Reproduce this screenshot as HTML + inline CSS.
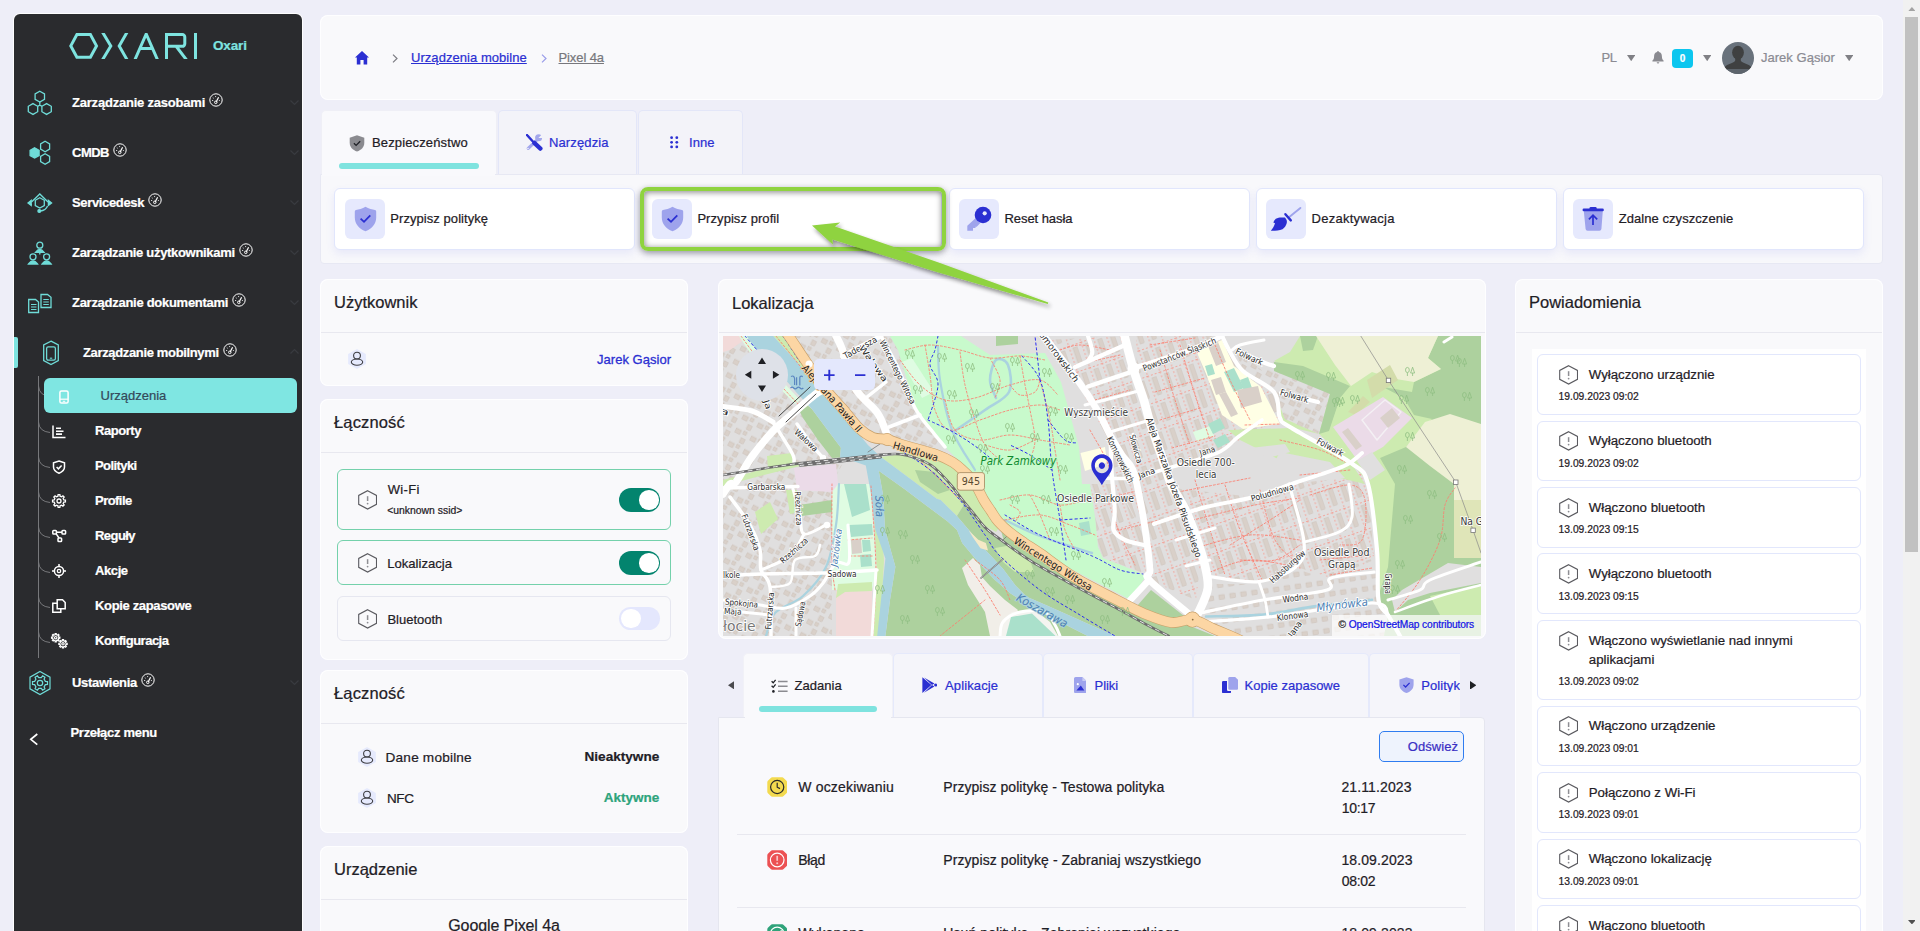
<!DOCTYPE html>
<html lang="pl">
<head>
<meta charset="utf-8">
<title>Oxari - Pixel 4a</title>
<style>
*{box-sizing:border-box;margin:0;padding:0}
html,body{width:1920px;height:931px;overflow:hidden}
body{-webkit-text-stroke:.22px;background:#eeeef8;font-family:"Liberation Sans",sans-serif;color:#1f2026;position:relative;font-size:14px}
.abs{position:absolute}
.card{position:absolute;background:#f9f9fb;border-radius:8px;box-shadow:inset 0 0 0 1px #fefeff}
.t{position:absolute;white-space:nowrap;line-height:1}
/* sidebar */
#side{position:absolute;left:14px;top:14px;width:288px;height:917px;background:#2a2b2e;border-radius:6px 6px 0 0;box-shadow:0 0 0 1px rgba(255,255,255,.85)}
#side .mi{position:absolute;margin-top:1.2px;left:58px;color:#fff;font-weight:bold;font-size:13px;letter-spacing:-.3px;white-space:nowrap;line-height:16px}
#side .sm{position:absolute;left:81px;color:#fff;font-weight:bold;font-size:13px;letter-spacing:-.45px;white-space:nowrap;line-height:16px}
#side svg{position:absolute;overflow:visible}
#side .mi svg.g{position:relative;display:inline-block;vertical-align:top;margin-left:4px;top:-2px}
.chev{position:absolute;left:275.5px;width:9px;height:9px}
/* header */
.hdrtxt{color:#8a8a92;font-size:13px;letter-spacing:-.3px}
/* cards heading */
.h{position:absolute;left:14px;top:15px;font-size:16.5px;color:#1f2026;letter-spacing:-.2px;white-space:nowrap;line-height:18px}
.hr{position:absolute;left:0;right:0;height:1px;background:#e9e9f0}
.act{position:absolute;top:188.5px;height:60.5px;width:301px;background:#fff;border-radius:6px;border:1px solid #eef0fb;box-shadow:0 2px 6px rgba(80,90,200,.10)}
.act .ib{position:absolute;left:9.3px;top:10px;width:40px;height:40px;border-radius:6px;background:#e6e9fd}
.act .lb{position:absolute;left:55px;top:22px;font-size:13px;letter-spacing:.06px;color:#1f2026;white-space:nowrap;line-height:16px}

.lnk{color:#2b2fd2}
.tab{position:absolute;top:110px;height:65px;background:#f3f3f9;border:1px solid #e3e6f8;border-bottom:none;border-radius:5px 5px 0 0}
.tab.on{background:#f9f9fc;border-color:#efeff6}
.b13{font-size:13px;letter-spacing:.08px}

.act{top:188px !important;height:61.5px !important;border-color:#e1e6fc !important;box-shadow:0 4px 8px rgba(90,100,230,.10) !important}
.hd{position:absolute;left:14px;font-size:16.5px;color:#1f2026;white-space:nowrap;line-height:1;top:15.4px}
.dv{position:absolute;left:1px;right:1px;height:1px;background:#e8e8ef;top:53px}
.tg{position:absolute;left:17px;width:334px;border:1px solid #e6e7f0;border-radius:6px}
.tg.on{border:1.2px solid #74d1ab}
.sw{position:absolute;left:282px;width:41.3px;height:23.6px;border-radius:12px;background:#03846e}
.sw i{position:absolute;right:1.6px;top:2px;width:19.6px;height:19.6px;border-radius:50%;background:#fff}
.sw.off{background:#e4e7fd}
.sw.off i{right:auto;left:2px}

.tb2{position:absolute;top:653px;height:64.6px;background:#f5f5fa;border:1px solid #e5e9fb;border-bottom:none;border-radius:5px 5px 0 0}
.tb2.on{background:#f9f9fc;border-color:#f1f1f7}
.tk{position:absolute;font-size:14px;white-space:nowrap;line-height:1;color:#1f2026}
.nt{position:absolute;left:1537.2px;width:323.8px;background:#fff;border:1px solid #e2e7fc;border-radius:6px}
.nt .tt{position:absolute;left:50.6px;top:9.5px;font-size:13.25px;line-height:19px;color:#1f2026;white-space:nowrap}
.nt .dt{position:absolute;left:20.4px;font-size:10.3px;line-height:1;color:#1f2026;white-space:nowrap}
</style>
</head>
<body>

<!-- SIDEBAR -->
<div id="side">
  <svg style="left:55px;top:19px;overflow:hidden" width="132" height="26" viewBox="0 0 132 26" fill="none" stroke="#7ee4e0" stroke-width="3" stroke-linejoin="miter">
    <path d="M1.8 12.9 L7.9 1.6 H21.4 L27.5 12.9 L21.4 24.2 H7.9 Z"/>
    <path d="M33.4 -1 L41.8 12.9 L33.4 27 M58.2 -1 L50.2 12.9 L58.2 27"/>
    <path d="M65.8 27 L77.2 1 L88.6 27 M70.5 15.4 H84"/>
    <path d="M97.5 27 V1.6 H113.3 a2.5 2.5 0 0 1 2.5 2.5 V10.8 a2.5 2.5 0 0 1 -2.5 2.5 H97.5 M107.3 13.5 L117.6 27"/>
    <path d="M126.5 -1 V27"/>
  </svg>
  <div class="t" style="left:199px;top:24.5px;color:#7ee4e0;font-weight:bold;font-size:13.5px;letter-spacing:-.15px">Oxari</div>
  <div class="mi" style="left:58px;top:80px;letter-spacing:-0.21px">Zarządzanie zasobami<svg class="g" width="14" height="14" viewBox="0 0 14 14" fill="none" stroke="#fff" stroke-width="1"><circle cx="7" cy="7" r="6.2"/><path d="M7 9.2 L9.6 4.2" stroke-width="1.2"/><circle cx="6.8" cy="9.3" r="1.3" stroke-width=".9"/><path d="M3 7.5 h1.2 M3.8 4.6 l.9 .7 M6.6 3 v1.1 M10.9 7.5 h-1" stroke-width=".8"/></svg></div>
  <div class="mi" style="left:58px;top:130px;letter-spacing:-0.5px">CMDB<svg class="g" width="14" height="14" viewBox="0 0 14 14" fill="none" stroke="#fff" stroke-width="1"><circle cx="7" cy="7" r="6.2"/><path d="M7 9.2 L9.6 4.2" stroke-width="1.2"/><circle cx="6.8" cy="9.3" r="1.3" stroke-width=".9"/><path d="M3 7.5 h1.2 M3.8 4.6 l.9 .7 M6.6 3 v1.1 M10.9 7.5 h-1" stroke-width=".8"/></svg></div>
  <div class="mi" style="left:58px;top:180px;letter-spacing:-0.35px">Servicedesk<svg class="g" width="14" height="14" viewBox="0 0 14 14" fill="none" stroke="#fff" stroke-width="1"><circle cx="7" cy="7" r="6.2"/><path d="M7 9.2 L9.6 4.2" stroke-width="1.2"/><circle cx="6.8" cy="9.3" r="1.3" stroke-width=".9"/><path d="M3 7.5 h1.2 M3.8 4.6 l.9 .7 M6.6 3 v1.1 M10.9 7.5 h-1" stroke-width=".8"/></svg></div>
  <div class="mi" style="left:58px;top:230px;letter-spacing:-0.31px">Zarządzanie użytkownikami<svg class="g" width="14" height="14" viewBox="0 0 14 14" fill="none" stroke="#fff" stroke-width="1"><circle cx="7" cy="7" r="6.2"/><path d="M7 9.2 L9.6 4.2" stroke-width="1.2"/><circle cx="6.8" cy="9.3" r="1.3" stroke-width=".9"/><path d="M3 7.5 h1.2 M3.8 4.6 l.9 .7 M6.6 3 v1.1 M10.9 7.5 h-1" stroke-width=".8"/></svg></div>
  <div class="mi" style="left:58px;top:280px;letter-spacing:-0.28px">Zarządzanie dokumentami<svg class="g" width="14" height="14" viewBox="0 0 14 14" fill="none" stroke="#fff" stroke-width="1"><circle cx="7" cy="7" r="6.2"/><path d="M7 9.2 L9.6 4.2" stroke-width="1.2"/><circle cx="6.8" cy="9.3" r="1.3" stroke-width=".9"/><path d="M3 7.5 h1.2 M3.8 4.6 l.9 .7 M6.6 3 v1.1 M10.9 7.5 h-1" stroke-width=".8"/></svg></div>
  <div class="mi" style="left:69px;top:330px;letter-spacing:-0.35px">Zarządzanie mobilnymi<svg class="g" width="14" height="14" viewBox="0 0 14 14" fill="none" stroke="#fff" stroke-width="1"><circle cx="7" cy="7" r="6.2"/><path d="M7 9.2 L9.6 4.2" stroke-width="1.2"/><circle cx="6.8" cy="9.3" r="1.3" stroke-width=".9"/><path d="M3 7.5 h1.2 M3.8 4.6 l.9 .7 M6.6 3 v1.1 M10.9 7.5 h-1" stroke-width=".8"/></svg></div>
  <div class="mi" style="left:58px;top:660px;letter-spacing:-0.29px">Ustawienia<svg class="g" width="14" height="14" viewBox="0 0 14 14" fill="none" stroke="#fff" stroke-width="1"><circle cx="7" cy="7" r="6.2"/><path d="M7 9.2 L9.6 4.2" stroke-width="1.2"/><circle cx="6.8" cy="9.3" r="1.3" stroke-width=".9"/><path d="M3 7.5 h1.2 M3.8 4.6 l.9 .7 M6.6 3 v1.1 M10.9 7.5 h-1" stroke-width=".8"/></svg></div>
  <div class="mi" style="left:56.5px;top:710px;letter-spacing:-0.3px">Przełącz menu</div>
  <svg class="chev" style="top:84px" viewBox="0 0 9 9" fill="none" stroke="#393b40" stroke-width="1.2"><path d="M.5 2.5 L4.5 6.5 L8.5 2.5"/></svg>
  <svg class="chev" style="top:134px" viewBox="0 0 9 9" fill="none" stroke="#393b40" stroke-width="1.2"><path d="M.5 2.5 L4.5 6.5 L8.5 2.5"/></svg>
  <svg class="chev" style="top:184px" viewBox="0 0 9 9" fill="none" stroke="#393b40" stroke-width="1.2"><path d="M.5 2.5 L4.5 6.5 L8.5 2.5"/></svg>
  <svg class="chev" style="top:234px" viewBox="0 0 9 9" fill="none" stroke="#393b40" stroke-width="1.2"><path d="M.5 2.5 L4.5 6.5 L8.5 2.5"/></svg>
  <svg class="chev" style="top:284px" viewBox="0 0 9 9" fill="none" stroke="#393b40" stroke-width="1.2"><path d="M.5 2.5 L4.5 6.5 L8.5 2.5"/></svg>
  <svg class="chev" style="top:664px" viewBox="0 0 9 9" fill="none" stroke="#393b40" stroke-width="1.2"><path d="M.5 2.5 L4.5 6.5 L8.5 2.5"/></svg>
  <svg class="chev" style="top:333px" viewBox="0 0 9 9" fill="none" stroke="#393b40" stroke-width="1.2"><path d="M.5 6.5 L4.5 2.5 L8.5 6.5"/></svg>
  <svg style="left:13px;top:76px" width="26" height="26" viewBox="0 0 26 26" fill="none" stroke="#6fdcd8" stroke-width="1.3"><polygon points="12.8,1.2 17.5,3.9 17.5,9.3 12.8,12.0 8.1,9.3 8.1,3.9"/><polygon points="6.0,13.6 10.7,16.3 10.7,21.7 6.0,24.4 1.3,21.7 1.3,16.3"/><polygon points="19.6,13.6 24.3,16.3 24.3,21.7 19.6,24.4 14.9,21.7 14.9,16.3"/><path d="M12.8 12 v4 M10.7 16.3 l2.1 -1.2 l2.1 1.2"/></svg>
  <svg style="left:13px;top:126px" width="26" height="26" viewBox="0 0 26 26" fill="none" stroke="#6fdcd8" stroke-width="1.3"><polygon points="7.6,7.7 12.1,10.3 12.1,15.5 7.6,18.1 3.1,15.5 3.1,10.3" fill="#6fdcd8"/><polygon points="18.1,1.3 22.6,3.9 22.6,9.1 18.1,11.7 13.6,9.1 13.6,3.9"/><polygon points="18.1,13.8 22.6,16.4 22.6,21.6 18.1,24.2 13.6,21.6 13.6,16.4"/></svg>
  <svg style="left:13px;top:176px" width="26" height="26" viewBox="0 0 26 26" fill="none" stroke="#6fdcd8" stroke-width="1.3"><polygon points="12.8,7.7 17.3,10.3 17.3,15.5 12.8,18.1 8.3,15.5 8.3,10.3"/><path d="M4.5 12 L12.8 4 L21 12"/><path d="M1 12.9 L4.2 10.3 V15.5 Z M24.6 12.9 L21.4 10.3 V15.5 Z" fill="#6fdcd8"/><path d="M20.5 16 Q19 20.5 13 21"/><circle cx="12.3" cy="21" r="1.4" fill="#6fdcd8"/></svg>
  <svg style="left:13px;top:226px" width="26" height="26" viewBox="0 0 26 26" fill="none" stroke="#6fdcd8" stroke-width="1.3"><circle cx="12.8" cy="5.2" r="3"/><path d="M8.5 12.3 Q12.8 6.5 17.1 12.3 Z" fill="#6fdcd8"/><circle cx="6" cy="16.8" r="3"/><path d="M1.5 24 Q6 18 10.5 24 Z" fill="#6fdcd8"/><circle cx="19.6" cy="16.8" r="3"/><path d="M15.1 24 Q19.6 18 24.1 24 Z" fill="#6fdcd8"/><path d="M12.8 12.5 v2"/></svg>
  <svg style="left:13px;top:278px" width="26" height="24" viewBox="0 0 26 24" fill="none" stroke="#6fdcd8" stroke-width="1.3"><path d="M1.7 7.5 H8.5 L11.5 10 V20.5 H1.7 Z"/><path d="M4 12.5 h5.5 M4 15 h5.5 M4 17.5 h5.5" stroke-width="1.1"/><path d="M14 2.5 H20.5 L24 5.2 V15.5 H14 Z"/><path d="M16.3 7.5 h5.5 M16.3 10 h5.5 M16.3 12.5 h5.5" stroke-width="1.1"/></svg>
  <svg style="left:28px;top:326px" width="18" height="26" viewBox="0 0 18 26" fill="none" stroke="#6fdcd8" stroke-width="1.3"><path d="M9 1.2 L16.3 5 V20.5 L9 24.6 L1.7 20.5 V5 Z"/><rect x="4.6" y="6.8" width="8.8" height="13.4" rx="1.6"/><path d="M7.8 18.2 h2.4" stroke-width="1.1"/></svg>
  <div class="abs" style="left:0;top:323px;width:4px;height:31px;background:#7ee4e0;border-radius:0 2px 2px 0"></div>
  <svg style="left:14px;top:656px" width="24" height="26" viewBox="0 0 24 26" fill="none" stroke="#6fdcd8" stroke-width="1.2"><polygon points="12.0,1.4 22.0,7.2 22.0,18.8 12.0,24.6 2.0,18.8 2.0,7.2"/><polygon points="17.36,11.38 19.48,11.65 19.48,14.35 17.36,14.62 16.08,16.83 16.91,18.80 14.57,20.15 13.28,18.45 10.72,18.45 9.43,20.15 7.09,18.80 7.92,16.83 6.64,14.62 4.52,14.35 4.52,11.65 6.64,11.38 7.92,9.17 7.09,7.20 9.43,5.85 10.72,7.55 13.28,7.55 14.57,5.85 16.91,7.20 16.08,9.17"/><circle cx="12" cy="13" r="2.7"/></svg>
  <svg style="left:15px;top:719px" width="10" height="13" viewBox="0 0 10 13" fill="none" stroke="#fff" stroke-width="1.7"><path d="M8.3 1 L1.8 6.3 L8.3 11.6"/></svg>
  <div class="abs" style="left:24px;top:362px;width:1px;height:282px;background:#77787b"></div>
  <svg style="left:24px;top:372.0px" width="13" height="12" viewBox="0 0 13 12" fill="none" stroke="#77787b" stroke-width="1"><path d="M.5 0 Q1 9.5 12 10.5"/></svg>
  <svg style="left:24px;top:408.0px" width="13" height="12" viewBox="0 0 13 12" fill="none" stroke="#77787b" stroke-width="1"><path d="M.5 0 Q1 9.5 12 10.5"/></svg>
  <svg style="left:24px;top:443.0px" width="13" height="12" viewBox="0 0 13 12" fill="none" stroke="#77787b" stroke-width="1"><path d="M.5 0 Q1 9.5 12 10.5"/></svg>
  <svg style="left:24px;top:477.5px" width="13" height="12" viewBox="0 0 13 12" fill="none" stroke="#77787b" stroke-width="1"><path d="M.5 0 Q1 9.5 12 10.5"/></svg>
  <svg style="left:24px;top:513.0px" width="13" height="12" viewBox="0 0 13 12" fill="none" stroke="#77787b" stroke-width="1"><path d="M.5 0 Q1 9.5 12 10.5"/></svg>
  <svg style="left:24px;top:547.7px" width="13" height="12" viewBox="0 0 13 12" fill="none" stroke="#77787b" stroke-width="1"><path d="M.5 0 Q1 9.5 12 10.5"/></svg>
  <svg style="left:24px;top:583.0px" width="13" height="12" viewBox="0 0 13 12" fill="none" stroke="#77787b" stroke-width="1"><path d="M.5 0 Q1 9.5 12 10.5"/></svg>
  <svg style="left:24px;top:617.7px" width="13" height="12" viewBox="0 0 13 12" fill="none" stroke="#77787b" stroke-width="1"><path d="M.5 0 Q1 9.5 12 10.5"/></svg>
  <div class="abs" style="left:30px;top:364px;width:253px;height:35px;background:#7fe6e2;border-radius:6px"></div>
  <div class="t" style="left:86.5px;top:374.5px;font-size:13px;color:#34495a;letter-spacing:0">Urządzenia</div>
  <svg style="left:45px;top:375.5px" width="10" height="14" viewBox="0 0 10 14" fill="none" stroke="#fff" stroke-width="1.5"><rect x=".9" y=".9" width="8.2" height="12.2" rx="1.6"/><path d="M1 9.2 h8" stroke-width="1.2"/><path d="M3.8 11.3 h2.4" stroke-width="1"/></svg>
  <div class="sm" style="top:408.5px;letter-spacing:-0.44px">Raporty</div>
  <div class="sm" style="top:443.5px;letter-spacing:-0.58px">Polityki</div>
  <div class="sm" style="top:478.6px;letter-spacing:-0.54px">Profile</div>
  <div class="sm" style="top:513.5px;letter-spacing:-0.55px">Reguły</div>
  <div class="sm" style="top:548.6px;letter-spacing:-0.4px">Akcje</div>
  <div class="sm" style="top:583.5px;letter-spacing:-0.34px">Kopie zapasowe</div>
  <div class="sm" style="top:618.6px;letter-spacing:-0.5px">Konfiguracja</div>
  <svg style="left:38px;top:410.5px" width="14" height="14" viewBox="0 0 14 14" fill="none" stroke="#fff" stroke-width="1.5"><path d="M1 .5 V12.5 H13.5"/><path d="M4 3.3 h5 M4 6.2 h7.5 M4 9.1 h6" stroke-width="1.6"/></svg>
  <svg style="left:38px;top:445.5px" width="14" height="14" viewBox="0 0 14 14" fill="none" stroke="#fff" stroke-width="1.5"><path d="M7 1 L12.5 2.8 V7 Q12.5 11 7 13.2 Q1.5 11 1.5 7 V2.8 Z"/><path d="M4.6 7 L6.4 8.8 L9.6 5.4"/></svg>
  <svg style="left:38px;top:479.5px" width="14" height="14" viewBox="0 0 14 14" fill="none" stroke="#fff" stroke-width="1.5"><polygon points="11.78,5.93 13.44,6.13 13.44,7.87 11.78,8.07 11.14,9.63 12.17,10.94 10.94,12.17 9.63,11.14 8.07,11.78 7.87,13.44 6.13,13.44 5.93,11.78 4.37,11.14 3.06,12.17 1.83,10.94 2.86,9.63 2.22,8.07 0.56,7.87 0.56,6.13 2.22,5.93 2.86,4.37 1.83,3.06 3.06,1.83 4.37,2.86 5.93,2.22 6.13,0.56 7.87,0.56 8.07,2.22 9.63,2.86 10.94,1.83 12.17,3.06 11.14,4.37" stroke-width="1.3"/><circle cx="7" cy="7" r="2" stroke-width="1.3"/></svg>
  <svg style="left:38px;top:514.5px" width="14" height="14" viewBox="0 0 14 14" fill="none" stroke="#fff" stroke-width="1.5"><rect x=".8" y="1.5" width="3.6" height="3.6" rx=".8"/><rect x="10" y="1.5" width="3.6" height="3.6" rx=".8"/><rect x="6" y="9" width="3.6" height="3.6" rx=".8"/><path d="M4.4 3.3 H10 M4.2 4.8 L7 9"/></svg>
  <svg style="left:38px;top:549.5px" width="14" height="14" viewBox="0 0 14 14" fill="none" stroke="#fff" stroke-width="1.5"><circle cx="7" cy="7" r="4.6"/><circle cx="7" cy="7" r="1.7" stroke-width="1.3"/><path d="M7 0 v2.4 M7 11.6 v2.4 M0 7 h2.4 M11.6 7 h2.4"/></svg>
  <svg style="left:38px;top:585.0px" width="14" height="14" viewBox="0 0 14 14" fill="none" stroke="#fff" stroke-width="1.5"><path d="M5.2 .8 H10.5 L13.2 3.5 V9.8 H5.2 Z"/><path d="M5.2 4.2 H.8 V13.2 H8.8 V9.8"/></svg>
  <svg style="left:37px;top:618.7px" width="17" height="16" viewBox="0 0 17 16" fill="none" stroke="#fff" stroke-width="1.2"><polygon points="7.63,4.05 8.86,4.14 8.86,5.26 7.63,5.35 7.23,6.31 8.04,7.25 7.25,8.04 6.31,7.23 5.35,7.63 5.26,8.86 4.14,8.86 4.05,7.63 3.09,7.23 2.15,8.04 1.36,7.25 2.17,6.31 1.77,5.35 0.54,5.26 0.54,4.14 1.77,4.05 2.17,3.09 1.36,2.15 2.15,1.36 3.09,2.17 4.05,1.77 4.14,0.54 5.26,0.54 5.35,1.77 6.31,2.17 7.25,1.36 8.04,2.15 7.23,3.09"/><circle cx="4.7" cy="4.7" r="1.2"/><polygon points="14.93,10.15 16.16,10.24 16.16,11.36 14.93,11.45 14.53,12.41 15.34,13.35 14.55,14.14 13.61,13.33 12.65,13.73 12.56,14.96 11.44,14.96 11.35,13.73 10.39,13.33 9.45,14.14 8.66,13.35 9.47,12.41 9.07,11.45 7.84,11.36 7.84,10.24 9.07,10.15 9.47,9.19 8.66,8.25 9.45,7.46 10.39,8.27 11.35,7.87 11.44,6.64 12.56,6.64 12.65,7.87 13.61,8.27 14.55,7.46 15.34,8.25 14.53,9.19"/><circle cx="12" cy="10.8" r="1.2"/></svg>
</div>

<!-- HEADER -->
<div class="card" style="left:320px;top:15px;width:1563px;height:84.5px;border-radius:8px"></div>
<svg class="abs" style="left:355px;top:51px" width="14" height="13.5" viewBox="0 0 14 13.5"><path d="M7 0 L14 6.6 H12.2 V13.5 H8.6 V9 H5.4 V13.5 H1.8 V6.6 H0 Z" fill="#2b2fd2"/></svg>
<svg class="abs" style="left:392px;top:53.5px" width="6" height="9" viewBox="0 0 6 9" fill="none" stroke="#7c7c82" stroke-width="1.2"><path d="M1 .6 L5 4.5 L1 8.4"/></svg>
<div class="t b13 lnk" style="left:411px;top:51px;text-decoration:underline;letter-spacing:.05px">Urządzenia mobilne</div>
<svg class="abs" style="left:540.5px;top:53.5px" width="6" height="9" viewBox="0 0 6 9" fill="none" stroke="#9a9de9" stroke-width="1.2"><path d="M1 .6 L5 4.5 L1 8.4"/></svg>
<div class="t b13" style="left:558.5px;top:51px;text-decoration:underline;color:#77777c;letter-spacing:-.1px">Pixel 4a</div>

<div class="t" style="left:1601.5px;top:50.8px;font-size:13px;color:#8b8b93;letter-spacing:-.4px">PL</div>
<svg class="abs" style="left:1627px;top:55px" width="8.4" height="6.2" viewBox="0 0 8.4 6.2"><path d="M0 0 H8.4 L4.2 6.2 Z" fill="#808085"/></svg>
<svg class="abs" style="left:1651.5px;top:51px" width="12" height="12.6" viewBox="0 0 12 12.6"><path d="M6 0 C6.6 0 6.9 .4 6.9 1 C9 1.5 9.9 3.2 9.9 5.2 C9.9 7.8 10.6 8.8 11.6 9.6 V10.4 H.4 V9.6 C1.4 8.8 2.1 7.8 2.1 5.2 C2.1 3.2 3 1.5 5.1 1 C5.1 .4 5.4 0 6 0 Z M4.7 11.2 H7.3 A1.3 1.3 0 0 1 4.7 11.2 Z" fill="#8a8a90"/></svg>
<div class="abs" style="left:1672px;top:49px;width:21px;height:19px;border-radius:4px;background:#0cc6ef;color:#fff;font-weight:bold;font-size:10px;text-align:center;line-height:19.5px">0</div>
<svg class="abs" style="left:1703px;top:55px" width="8.4" height="6.2" viewBox="0 0 8.4 6.2"><path d="M0 0 H8.4 L4.2 6.2 Z" fill="#808085"/></svg>
<svg class="abs" style="left:1722px;top:42px" width="32" height="32" viewBox="0 0 32 32"><defs><clipPath id="av"><circle cx="16" cy="16" r="16"/></clipPath></defs><circle cx="16" cy="16" r="16" fill="#69727c"/><g clip-path="url(#av)" fill="#3f4041"><ellipse cx="16" cy="10.6" rx="5.9" ry="6.9"/><path d="M13.2 15 h5.6 v3.6 c0 2 8.4 3.4 10.6 6.8 v2 H2.6 v-2 c2.2 -3.4 10.6 -4.8 10.6 -6.8 Z"/><rect x="2" y="27" width="28" height="6" fill="#5d646c"/></g></svg>
<div class="t" style="left:1761px;top:51px;font-size:13px;color:#8b8b93;letter-spacing:.02px">Jarek Gąsior</div>
<svg class="abs" style="left:1844.6px;top:55px" width="8.4" height="6.2" viewBox="0 0 8.4 6.2"><path d="M0 0 H8.4 L4.2 6.2 Z" fill="#808085"/></svg>

<!-- TOP TABS -->
<div class="tab on" style="left:320.5px;width:176px"></div>
<div class="tab" style="left:497.5px;width:139.5px"></div>
<div class="tab" style="left:637.5px;width:105px"></div>
<div class="abs" style="left:320px;top:174px;width:1563px;height:89.5px;background:#f8f8fb;border:1px solid #e7e8f3;border-radius:0 4px 4px 4px"></div>
<div class="abs" style="left:322px;top:173px;width:173px;height:3px;background:#f9f9fc"></div>
<svg class="abs" style="left:349px;top:134.5px" width="16" height="17" viewBox="0 0 16 17"><path d="M8 .3 L15.3 2.8 V7.8 C15.3 12 12.4 15 8 16.6 C3.6 15 .7 12 .7 7.8 V2.8 Z" fill="#8b8b90"/><path d="M4.9 8.3 L7.1 10.4 L11.2 6.2" fill="none" stroke="#1f2026" stroke-width="1.3"/></svg>
<div class="t b13" style="left:372px;top:135.5px;letter-spacing:.14px">Bezpieczeństwo</div>
<div class="abs" style="left:339px;top:163px;width:140px;height:5.7px;border-radius:3px;background:#7fe3df"></div>
<svg class="abs" style="left:526.2px;top:133.7px" width="17" height="17" viewBox="0 0 17 17" fill="none"><path d="M10.2 6.8 L2.2 14.4" stroke="#a3a7ec" stroke-width="3.1" stroke-linecap="round"/><circle cx="12.6" cy="3.7" r="3.5" fill="#a3a7ec"/><path d="M12.4 4 L16.6 -.4 L17 4 Z" fill="#f3f3f9"/><circle cx="2" cy="14.5" r=".8" fill="#f3f3f9"/><path d="M1 1 L6.4 7" stroke="#2b2fd2" stroke-width="2.5" stroke-linecap="round"/><path d="M8.3 8.9 L14.4 14.6" stroke="#2b2fd2" stroke-width="4.3" stroke-linecap="round"/></svg>
<div class="t b13 lnk" style="left:549px;top:135.5px;letter-spacing:.12px">Narzędzia</div>
<svg class="abs" style="left:670px;top:135.6px" width="9" height="13" viewBox="0 0 9 13" fill="#2b2fd2"><circle cx="1.6" cy="1.7" r="1.4"/><circle cx="6.8" cy="1.7" r="1.4"/><circle cx="1.6" cy="6.3" r="1.4"/><circle cx="6.8" cy="6.3" r="1.4"/><circle cx="1.6" cy="10.9" r="1.4"/><circle cx="6.8" cy="10.9" r="1.4"/></svg>
<div class="t b13 lnk" style="left:689px;top:135.5px;letter-spacing:.1px">Inne</div>

<!-- ACTIONS -->
<div class="act" style="left:334.3px"><div class="ib"><svg class="abs" style="left:9px;top:7px" width="23" height="26" viewBox="0 0 23 26"><path d="M11.5 .7 C14.5 2.4 18.5 3.6 21 4 Q22.2 4.3 22.2 5.5 V11.5 C22.2 18 18 22.6 11.5 25.2 C5 22.6 .8 18 .8 11.5 V5.5 Q.8 4.3 2 4 C4.5 3.6 8.5 2.4 11.5 .7 Z" fill="#9ea3ec"/><path d="M6.6 12.6 L10 15.8 L16.3 9.3" fill="none" stroke="#2b2fd2" stroke-width="1.8"/></svg></div><div class="lb">Przypisz politykę</div></div>
<div class="act" style="left:641.4px"><div class="ib"><svg class="abs" style="left:9px;top:7px" width="23" height="26" viewBox="0 0 23 26"><path d="M11.5 .7 C14.5 2.4 18.5 3.6 21 4 Q22.2 4.3 22.2 5.5 V11.5 C22.2 18 18 22.6 11.5 25.2 C5 22.6 .8 18 .8 11.5 V5.5 Q.8 4.3 2 4 C4.5 3.6 8.5 2.4 11.5 .7 Z" fill="#9ea3ec"/><path d="M6.6 12.6 L10 15.8 L16.3 9.3" fill="none" stroke="#2b2fd2" stroke-width="1.8"/></svg></div><div class="lb">Przypisz profil</div></div>
<div class="act" style="left:948.5px"><div class="ib"><svg class="abs" style="left:0;top:0" width="40" height="40" viewBox="0 0 40 40"><path d="M16.5 19.3 L21.1 24.3 L17.75 27.7 H16.5 V28.9 H14 V31.8 H8.3 V26.8 Z" fill="#9ea3ec"/><circle cx="24" cy="16" r="8.3" fill="#2b2fd2"/><circle cx="25.7" cy="14.3" r="2.1" fill="#e8eafc"/></svg></div><div class="lb" style="letter-spacing:-.07px">Reset hasła</div></div>
<div class="act" style="left:1255.6px"><div class="ib"><svg class="abs" style="left:0;top:0" width="40" height="40" viewBox="0 0 40 40"><path d="M34.4 8.9 L23.6 17.7" stroke="#9ea3ec" stroke-width="1.9" stroke-linecap="round" fill="none"/><path d="M19.4 15.2 L24.8 21.4" stroke="#2b2fd2" stroke-width="2.4" stroke-linecap="round" fill="none"/><path d="M19 18.6 C21 21 21.2 22.6 20.7 24.3 C20 27 18.5 28.8 16.5 30.2 C13 31.6 9 31.9 4.8 31.8 C6.8 29.6 8.2 27 9 24.3 L7.3 23.5 C7.8 22 8.6 20.8 9.8 19.75 C12 18.6 14.4 18.3 16.5 18.5 Z" fill="#2b2fd2"/></svg></div><div class="lb" style="letter-spacing:.24px">Dezaktywacja</div></div>
<div class="act" style="left:1562.7px"><div class="ib"><svg class="abs" style="left:0;top:0" width="40" height="40" viewBox="0 0 40 40"><path d="M10.8 12 H29.8 L28.4 30 a2 2 0 0 1 -2 1.8 H14.6 a2 2 0 0 1 -2 -1.8 Z" fill="#9ea3ec"/><path d="M10.9 9.5 H29.5 a1.3 1.3 0 0 1 0 2.75 H10.9 a1.3 1.3 0 0 1 0 -2.75 Z M16.4 9.6 a1.4 1.4 0 0 1 1.2 -1.5 H22.6 a1.4 1.4 0 0 1 1.2 1.5 Z" fill="#2b2fd2"/><path d="M20 26 V16.4 M15.9 20.3 L20 16.2 L24.2 20.3" fill="none" stroke="#2b2fd2" stroke-width="1.7"/></svg></div><div class="lb">Zdalne czyszczenie</div></div>
<div class="abs" style="left:639.5px;top:187.4px;width:306.8px;height:63.2px;border:4.6px solid #8fd33f;border-radius:8px;box-shadow:0 2px 6px rgba(0,0,0,.36), inset 0 1px 6px rgba(0,0,0,.5)"></div>


<!-- LEFT COL -->
<div class="card" style="left:320px;top:279px;width:368px;height:107px"><div class="hd">Użytkownik</div><div class="dv"></div><svg class="abs" style="left:28.0px;top:70.0px" width="18" height="20" viewBox="0 0 18 20" fill="none"><path d="M9 .1 L17.85 5 V15 L9 19.9 L.15 15 V5 Z" fill="#e6eafd"/><circle cx="9" cy="6.6" r="3.4" stroke="#3d3d42" stroke-width="1.1"/><ellipse cx="9" cy="13.1" rx="5.7" ry="3.1" stroke="#3d3d42" stroke-width="1.1"/></svg><div class="t lnk" style="right:17px;top:74px;font-size:13px;letter-spacing:.02px;-webkit-text-stroke:.3px #2b2fd2">Jarek Gąsior</div></div>
<div class="card" style="left:320px;top:399px;width:368px;height:260.6px"><div class="hd" style="letter-spacing:.14px">Łączność</div><div class="dv" style="top:53.2px"></div><div class="tg on" style="top:70.2px;height:60.6px"><svg class="abs" style="left:19.2px;top:19.1px" width="20" height="21" viewBox="0 0 20 21" fill="none" stroke="#5a5a5f" stroke-width="1.1"><path d="M10.6 1.7 L19.5 6.4 V15.3 L10.6 20.1 L1.7 15.3 V6.4 Z"/><path d="M10.6 7.2 V12" stroke="#8e8e93" stroke-width="1.5"/><circle cx="10.6" cy="14.6" r=".9" fill="#8e8e93" stroke="none"/></svg><div class="t" style="left:49.7px;top:12.8px;font-size:13px;letter-spacing:.36px">Wi-Fi</div><div class="t" style="left:49.2px;top:35.6px;font-size:10.4px">&lt;unknown ssid&gt;</div><div class="sw" style="left:280.8px;top:17.8px"><i></i></div></div><div class="tg on" style="top:141.4px;height:45.1px"><svg class="abs" style="left:19.2px;top:10.899999999999999px" width="20" height="21" viewBox="0 0 20 21" fill="none" stroke="#5a5a5f" stroke-width="1.1"><path d="M10.6 1.7 L19.5 6.4 V15.3 L10.6 20.1 L1.7 15.3 V6.4 Z"/><path d="M10.6 7.2 V12" stroke="#8e8e93" stroke-width="1.5"/><circle cx="10.6" cy="14.6" r=".9" fill="#8e8e93" stroke="none"/></svg><div class="t" style="left:49.2px;top:15.6px;font-size:13.1px">Lokalizacja</div><div class="sw" style="left:280.8px;top:9.6px"><i></i></div></div><div class="tg" style="top:197.1px;height:45.1px"><svg class="abs" style="left:19.4px;top:11.100000000000001px" width="20" height="21" viewBox="0 0 20 21" fill="none" stroke="#5a5a5f" stroke-width="1.1"><path d="M10.6 1.7 L19.5 6.4 V15.3 L10.6 20.1 L1.7 15.3 V6.4 Z"/><path d="M10.6 7.2 V12" stroke="#8e8e93" stroke-width="1.5"/><circle cx="10.6" cy="14.6" r=".9" fill="#8e8e93" stroke="none"/></svg><div class="t" style="left:49.4px;top:16px;font-size:13px">Bluetooth</div><div class="sw off" style="left:281px;top:9.8px"><i></i></div></div></div>
<div class="card" style="left:320px;top:669.8px;width:368px;height:163px"><div class="hd" style="letter-spacing:.14px;top:15.1px">Łączność</div><div class="dv" style="top:53.4px"></div><svg class="abs" style="left:38.0px;top:77.3px" width="18" height="20" viewBox="0 0 18 20" fill="none"><path d="M9 .1 L17.85 5 V15 L9 19.9 L.15 15 V5 Z" fill="#e6eafd"/><circle cx="9" cy="6.6" r="3.4" stroke="#3d3d42" stroke-width="1.1"/><ellipse cx="9" cy="13.1" rx="5.7" ry="3.1" stroke="#3d3d42" stroke-width="1.1"/></svg><div class="t" style="left:65.6px;top:80.9px;font-size:13.6px;letter-spacing:.2px">Dane mobilne</div><div class="t" style="right:28.7px;top:80.6px;font-size:13.6px;font-weight:bold">Nieaktywne</div><svg class="abs" style="left:38.0px;top:118.4px" width="18" height="20" viewBox="0 0 18 20" fill="none"><path d="M9 .1 L17.85 5 V15 L9 19.9 L.15 15 V5 Z" fill="#e6eafd"/><circle cx="9" cy="6.6" r="3.4" stroke="#3d3d42" stroke-width="1.1"/><ellipse cx="9" cy="13.1" rx="5.7" ry="3.1" stroke="#3d3d42" stroke-width="1.1"/></svg><div class="t" style="left:67px;top:122.4px;font-size:13.5px;letter-spacing:-.4px">NFC</div><div class="t" style="right:28.7px;top:121.6px;font-size:13.5px;font-weight:bold;color:#2ea47c">Aktywne</div></div>
<div class="card" style="left:320px;top:846px;width:368px;height:120px"><div class="hd" style="top:14.8px">Urządzenie</div><div class="dv" style="top:53.2px"></div><div class="t" style="left:0;width:368px;text-align:center;top:71.5px;font-size:16px;letter-spacing:-.1px">Google Pixel 4a</div></div>

<!-- MID COL -->
<!-- MAPSTART -->
<div class="card" style="left:718px;top:279px;width:767.5px;height:360px"><div class="hd" style="top:15.6px">Lokalizacja</div><div class="dv" style="top:53px"></div></div>
<svg class="abs" style="left:723px;top:336px;font-family:'DejaVu Sans','Liberation Sans',sans-serif" width="758" height="300" viewBox="723 336 758 300">
<rect x="723" y="336" width="758" height="300" fill="#e0dfdf"/>
<defs><pattern id="ph" width="17" height="15" patternUnits="userSpaceOnUse" patternTransform="rotate(28)"><rect x="1.5" y="2" width="5.5" height="4.5" fill="#d9d0c9" stroke="#c7bbb0" stroke-width=".4"/><rect x="10" y="8.5" width="4.5" height="5" fill="#d9d0c9" stroke="#c7bbb0" stroke-width=".4"/><rect x="9.5" y="1" width="3.5" height="3.5" fill="#d9d0c9" stroke="#c7bbb0" stroke-width=".4"/></pattern><pattern id="pb" width="13" height="27" patternUnits="userSpaceOnUse" patternTransform="rotate(-19)"><rect x="4" y="3.5" width="4.4" height="18" fill="#d9d0c9" stroke="#c7bbb0" stroke-width=".4"/><path d="M0 .5 H13 M.8 0 V27" stroke="#f59a8f" stroke-width=".8" stroke-dasharray="2 2" fill="none"/></pattern><pattern id="pc" width="11" height="12" patternUnits="userSpaceOnUse" patternTransform="rotate(-8)"><rect x="2" y="3" width="5.5" height="4.5" fill="#d9d0c9" stroke="#c7bbb0" stroke-width=".4"/></pattern></defs>
<polygon points="723.0,336.0 746.0,336.0 768.0,366.0 797.0,398.0 825.0,431.0 839.0,456.0 843.0,463.0 832.0,484.0 832.0,636.0 723.0,636.0" fill="url(#ph)" />
<polygon points="790.0,336.0 890.0,336.0 898.0,350.0 907.0,380.0 915.0,408.0 932.0,431.0 945.0,447.0 906.0,447.0 888.0,439.0 863.0,431.0 826.0,398.5" fill="url(#ph)" />
<polygon points="1136.0,336.0 1222.0,336.0 1229.0,350.0 1243.0,371.0 1274.0,392.0 1280.0,418.0 1240.0,440.0 1217.0,453.0 1170.0,468.0 1164.0,463.0 1148.0,414.6 1137.0,368.0" fill="url(#pb)" />
<polygon points="1172.0,488.0 1254.0,497.0 1296.0,482.5 1344.0,466.0 1362.0,453.0 1368.0,484.0 1374.0,560.0 1331.0,578.0 1296.0,566.7 1259.0,581.6 1210.0,576.6 1200.0,567.0 1190.0,517.0" fill="url(#pb)" />
<polygon points="1045.0,340.0 1127.0,336.0 1137.0,368.0 1148.0,414.6 1164.0,463.0 1171.0,484.0 1190.0,517.0 1200.0,567.0 1196.0,600.0 1160.0,585.0 1148.0,577.0 1143.0,534.0 1118.0,484.0 1108.0,439.0 1077.0,382.0" fill="url(#pb)" />
<polygon points="1206.0,584.0 1259.0,584.0 1296.0,569.0 1331.0,580.0 1376.0,574.0 1378.0,600.0 1388.0,615.0 1400.0,636.0 1240.0,636.0 1215.0,626.0 1205.0,600.0" fill="url(#pc)" />
<polygon points="1090.0,484.0 1116.0,484.0 1143.0,534.0 1146.0,574.0 1103.0,558.0 1098.0,547.0 1095.0,517.0" fill="url(#pb)" />
<polygon points="1246.0,336.0 1481.0,336.0 1481.0,636.0 1384.0,636.0 1388.0,615.0 1378.0,600.0 1377.0,550.0 1370.0,484.0 1351.0,463.0 1319.0,434.0 1290.0,427.0 1280.0,418.0 1274.0,392.0 1262.0,371.0" fill="#cdebb0" />
<polygon points="1222.0,336.0 1300.0,336.0 1290.0,352.0 1274.0,361.0 1330.0,394.0 1319.0,434.0 1285.0,419.0 1275.0,394.0 1243.0,373.0 1229.0,350.0" fill="#e0dfdf" />
<polygon points="1235.0,348.0 1262.5,371.0 1273.8,361.4 1330.2,393.6 1318.9,433.9 1285.0,419.4 1275.4,393.6 1243.2,372.7" fill="url(#ph)" />
<polygon points="1274.0,362.0 1303.0,366.0 1350.0,386.0 1340.0,398.0 1329.0,431.0 1319.0,434.0 1330.0,394.0 1274.0,371.0" fill="#add19e" />
<polygon points="1300.0,336.0 1318.0,336.0 1313.0,350.0 1303.0,351.0" fill="#add19e" />
<polygon points="1438.0,336.0 1481.0,336.0 1481.0,636.0 1384.0,636.0 1388.0,615.0 1377.0,600.0 1388.0,567.0 1395.0,484.0 1380.0,458.0 1406.0,447.0 1432.0,419.0 1414.0,415.0 1404.0,398.0 1383.0,387.0 1412.0,392.0 1414.0,382.0 1441.0,369.0 1428.0,358.0" fill="#add19e" />
<polygon points="1316.0,336.0 1438.0,336.0 1428.0,358.0 1441.0,369.0 1414.0,382.0 1390.0,378.0 1372.0,372.0 1351.0,386.0 1335.0,365.0" fill="#eef0d5" />
<polygon points="1406.0,447.0 1425.0,422.0 1450.0,414.0 1481.0,424.0 1481.0,558.0 1454.0,558.0 1454.0,484.0 1430.0,466.0" fill="#eef0d5" />
<polygon points="1454.0,500.0 1481.0,500.0 1481.0,558.0 1454.0,558.0" fill="#dfe5b8" />
<polygon points="1367.0,380.0 1390.0,365.0 1398.0,380.0 1372.0,398.0" fill="#d3dcaa" />
<polygon points="1348.0,412.0 1363.0,396.0 1370.0,402.0 1356.0,415.0" fill="#d3dcaa" />
<polygon points="1333.0,427.0 1383.0,397.0 1412.0,418.0 1383.0,447.0 1358.0,461.0" fill="#ebdbe8" />
<path d="M1362.0 420.0 L1385.0 400.0 L1401.0 412.0 L1377.0 440.0 L1362.0 420.0" fill="none" stroke="#f4f0f4" stroke-width="1.5" stroke-linejoin="round" stroke-linecap="round" />
<polygon points="1380.0,418.0 1392.0,408.0 1400.0,418.0 1388.0,428.0" fill="#d9d0c9" />
<polygon points="1342.0,432.0 1348.0,428.0 1362.0,446.0 1356.0,450.0" fill="#d9d0c9" />
<polygon points="1402.0,590.0 1448.0,563.0 1481.0,567.0 1481.0,583.0 1430.0,593.0 1408.0,600.0 1395.0,612.0 1392.0,600.0" fill="#e0dfdf" />
<polygon points="1430.0,596.0 1481.0,585.0 1481.0,615.0 1440.0,615.0" fill="#cdebb0" />
<polygon points="1357.0,461.0 1372.0,452.0 1385.0,470.0 1370.0,480.0" fill="#e0dfdf" />
<polygon points="1196.0,350.0 1222.0,340.0 1234.0,366.0 1261.0,387.0 1280.0,424.0 1243.0,429.0 1222.0,415.0 1206.0,374.0" fill="#ffffe5" />
<polygon points="1205.0,366.0 1212.0,364.0 1215.0,374.0 1208.0,376.0" fill="#aae0cb" />
<polygon points="1224.0,372.0 1234.0,368.0 1244.0,388.0 1234.0,392.0" fill="#aae0cb" />
<polygon points="1240.0,380.0 1248.0,377.0 1252.0,388.0 1244.0,391.0" fill="#aae0cb" />
<polygon points="1237.0,390.0 1258.0,386.0 1262.0,402.0 1241.0,408.0" fill="#d9d0c9" />
<polygon points="1208.0,346.0 1218.0,342.0 1226.0,362.0 1216.0,366.0" fill="#d9d0c9" />
<polygon points="1211.0,380.0 1221.0,377.0 1226.0,392.0 1216.0,395.0" fill="#d9d0c9" />
<polygon points="1219.0,394.0 1226.0,392.0 1238.0,414.0 1231.0,417.0" fill="#d9d0c9" />
<polygon points="1193.0,432.0 1210.0,426.0 1214.0,436.0 1197.0,442.0" fill="#dffce2" />
<polygon points="1208.0,424.0 1220.0,418.0 1225.0,428.0 1213.0,434.0" fill="#aae0cb" />
<polygon points="1213.0,440.0 1225.0,434.0 1230.0,442.0 1218.0,448.0" fill="#aae0cb" />
<polygon points="1228.0,430.0 1290.0,428.0 1351.0,463.0 1365.0,484.0 1340.0,478.0 1300.0,470.0 1270.0,455.0 1240.0,440.0" fill="#cdebb0" />
<polygon points="1250.0,448.0 1285.0,444.0 1290.0,452.0 1268.0,458.0" fill="#e0dfdf" />
<polygon points="1280.0,452.0 1330.0,462.0 1345.0,478.0 1290.0,484.0 1270.0,470.0" fill="#e0dfdf" />
<polygon points="1080.5,453.0 1105.0,447.0 1107.0,462.0 1100.0,466.0 1085.0,471.0" fill="#ffffe5" />
<polygon points="890.0,336.0 961.0,336.0 990.0,355.0 1045.0,353.0 1061.0,382.0 1079.0,447.0 1082.0,484.0 1090.0,484.0 1095.0,517.0 1098.0,547.0 1103.0,558.0 1143.0,574.0 1145.0,577.0 1131.0,600.0 1065.0,566.0 1006.0,530.0 993.0,505.0 975.0,484.0 960.0,462.0 945.0,447.0 932.0,431.0 915.0,408.0 907.0,380.0 898.0,350.0" fill="#c8facc" />
<polygon points="902.0,362.0 912.0,358.0 934.0,392.0 922.0,398.0" fill="#dffce2" />
<polygon points="996.0,336.0 1018.0,336.0 1018.0,344.0 996.0,346.0" fill="#add19e" />
<path d="M938.0 346.0 C938.3 351.7 937.7 366.0 940.0 380.0 C942.3 394.0 946.2 415.0 952.0 430.0 C957.8 445.0 971.2 463.3 975.0 470.0" fill="none" stroke="#aad3df" stroke-width="2.2" stroke-linejoin="round" stroke-linecap="round" />
<path d="M953.0 432.0 C958.3 428.3 975.7 416.7 985.0 410.0 C994.3 403.3 1005.2 399.5 1009.0 392.0 C1012.8 384.5 1010.2 370.3 1008.0 365.0 C1005.8 359.7 999.0 357.5 996.0 360.0 C993.0 362.5 990.0 373.7 990.0 380.0 C990.0 386.3 995.0 395.0 996.0 398.0" fill="none" stroke="#aad3df" stroke-width="2.6" stroke-linejoin="round" stroke-linecap="round" />
<path d="M1005.0 520.0 C1010.8 522.7 1025.5 530.5 1040.0 536.0 C1054.5 541.5 1083.3 550.2 1092.0 553.0" fill="none" stroke="#aad3df" stroke-width="2.4" stroke-linejoin="round" stroke-linecap="round" />
<polygon points="1079.0,523.0 1089.0,521.0 1091.0,534.0 1081.0,536.0" fill="#aae0cb" />
<polygon points="878.7,470.8 904.4,489.0 925.9,505.2 947.4,521.3 957.0,530.0 962.2,543.0 978.3,562.3 994.4,579.5 1010.6,593.4 1031.9,607.7 1059.8,621.7 1087.7,636.0 885.4,636.0 885.4,636.0 890.0,600.0 895.4,566.7 885.1,530.0 883.0,494.4" fill="#add19e" />
<polygon points="880.8,456.9 900.2,454.2 915.2,457.9 931.3,465.4 942.0,475.1 951.7,485.9 960.0,496.6 965.0,503.0 956.9,516.1 940.7,500.0 936.7,498.7 915.2,482.6 893.7,466.5" fill="#cdebb0" />
<polygon points="965.0,503.0 973.1,512.8 986.0,528.3 1004.0,542.1 1031.9,561.7 1073.8,585.4 1115.7,607.7 1143.6,623.1 1168.7,636.0 1115.7,636.0 1101.7,630.0 1073.8,617.5 1045.8,604.9 1026.7,596.7 1015.9,585.9 1003.0,568.7 985.9,550.5 970.8,532.2 956.9,516.1" fill="#add19e" />
<polygon points="995.0,548.0 1012.0,545.0 1030.0,560.0 1034.0,572.0 1015.0,572.0 1003.0,562.0" fill="#cdebb0" />
<polygon points="915.0,470.0 935.0,472.0 950.0,490.0 938.0,494.0 920.0,482.0" fill="#add19e" />
<polygon points="900.0,447.0 936.0,456.0 960.0,470.0 975.0,486.0 990.0,512.0 1000.0,526.0 996.0,532.0 985.0,526.0 972.0,510.0 960.0,495.0 942.0,474.0 930.0,464.0 915.0,457.0 900.0,454.0" fill="#cdebb0" />
<polygon points="1000.0,526.0 1040.0,556.0 1074.0,579.0 1116.0,602.0 1144.0,616.0 1172.0,626.0 1185.0,624.0 1200.0,630.0 1215.0,636.0 1168.7,636.0 1143.6,623.1 1115.7,607.7 1073.8,585.4 1031.9,561.7 1004.0,542.1" fill="#add19e" />
<polygon points="1151.0,590.0 1184.0,616.0 1170.0,620.0 1137.0,606.0" fill="#add19e" />
<polygon points="962.0,568.0 973.0,558.0 980.0,565.0 982.0,577.0 990.0,586.0 1005.0,600.0 1018.0,610.0 1012.0,620.0 1004.0,636.0 990.0,636.0 985.0,612.0 968.0,585.0" fill="#f1eee8" />
<polygon points="1002.0,620.0 1012.0,612.0 1035.0,610.0 1050.0,622.0 1058.0,636.0 1000.0,636.0" fill="#f4f4f0" />
<polygon points="1011.0,617.0 1032.0,613.5 1055.6,636.0 1006.0,636.0" fill="#aae0cb" />
<polygon points="832.0,484.0 870.0,484.0 877.0,570.0 872.0,590.0 832.0,590.0" fill="#dffce2" />
<polygon points="844.0,484.0 866.0,484.0 870.0,510.0 852.0,517.0" fill="#aae0cb" />
<polygon points="849.0,525.0 872.0,524.0 873.0,535.0 851.0,537.0" fill="#aae0cb" />
<polygon points="862.0,540.0 870.0,540.0 871.0,551.0 863.0,552.0" fill="#aae0cb" />
<polygon points="860.0,555.0 871.0,554.0 872.0,566.0 861.0,567.0" fill="#aae0cb" />
<polygon points="851.0,540.0 861.0,539.0 862.0,553.0 852.0,554.0" fill="#d9d0c9" />
<polygon points="836.0,591.0 872.0,590.0 872.0,636.0 836.0,636.0" fill="#f2dad9" />
<polygon points="838.0,584.0 872.0,582.0 872.0,591.0 845.0,592.0 836.0,598.0" fill="#cdebb0" />
<polygon points="794.0,468.0 836.0,464.0 838.0,484.0 832.0,492.0 797.0,490.0" fill="#ebdbe8" />
<polygon points="767.0,456.0 792.0,453.0 796.0,463.0 768.0,468.0" fill="#cdebb0" />
<polygon points="755.0,512.0 770.0,502.0 778.0,519.0 761.0,534.0" fill="#cdebb0" />
<polygon points="786.0,490.0 797.0,490.0 799.0,512.0 790.0,514.0" fill="#cdebb0" />
<polygon points="799.0,505.0 832.0,500.0 832.0,512.0 802.0,516.0" fill="#add19e" />
<polygon points="806.0,404.0 811.9,409.0 826.4,428.4 840.9,447.7 840.0,457.4 832.0,458.0 818.0,440.0 803.0,418.0 799.0,410.0" fill="#add19e" />
<polygon points="872.0,484.0 878.0,484.0 884.0,560.0 880.0,636.0 872.0,636.0 877.0,570.0" fill="#cdebb0" />
<polygon points="723.0,336.0 750.0,336.0 730.0,350.0 723.0,352.0" fill="#f2dad9" />
<polygon points="739.0,336.0 747.0,336.0 768.0,366.0 800.0,400.0 795.0,404.0 760.0,368.0" fill="#dffce2" />
<polygon points="773.2,336.0 783.0,336.0 806.0,366.0 815.0,380.0 812.0,383.0 800.6,366.2" fill="#cdebb0" />
<polygon points="723.0,480.0 760.0,470.0 800.0,462.0 800.0,466.0 760.0,476.0 723.0,486.0" fill="#cdebb0" />
<polygon points="746.6,336.0 773.2,336.0 800.6,366.2 822.6,391.6 838.0,409.0 854.5,428.4 867.9,445.0 880.8,456.9 893.7,466.5 915.2,482.6 936.7,498.7 940.7,500.0 956.9,516.1 970.8,532.2 985.9,550.5 1003.0,568.7 1015.9,585.9 1026.7,596.7 1045.8,604.9 1073.8,617.5 1101.7,630.0 1115.7,636.0 1087.7,636.0 1059.8,621.7 1031.9,607.7 1010.6,593.4 994.4,579.5 978.3,562.3 962.2,543.0 957.0,530.0 947.4,521.3 925.9,505.2 904.4,489.0 878.7,470.8 883.0,494.4 885.1,530.0 895.4,566.7 890.0,600.0 885.4,636.0 877.2,636.0 881.0,600.0 885.4,558.4 875.4,530.0 871.1,494.4 865.8,465.4 850.0,460.0 840.0,457.4 840.9,447.7 826.4,428.4 811.9,409.0 795.5,391.6 785.8,380.0 768.3,366.2" fill="#aad3df" />
<polygon points="968.7,530.6 978.3,539.7 985.9,543.0 988.0,550.5 980.5,548.3 973.0,537.6" fill="#f5e9c6" />
<path d="M839.0 484.0 C838.5 490.8 838.2 511.2 836.0 525.0 C833.8 538.8 831.5 555.2 826.0 567.0 C820.5 578.8 811.5 588.3 803.0 596.0 C794.5 603.7 781.2 606.3 775.0 613.0 C768.8 619.7 767.5 632.2 766.0 636.0" fill="none" stroke="#aad3df" stroke-width="2.2" stroke-linejoin="round" stroke-linecap="round" />
<path d="M1206.0 616.5 C1215.7 616.2 1246.0 616.3 1264.0 614.6 C1282.0 612.9 1296.0 608.9 1314.0 606.4 C1332.0 603.9 1362.3 600.9 1372.0 599.8" fill="none" stroke="#aad3df" stroke-width="2.6" stroke-linejoin="round" stroke-linecap="round" />
<path d="M1150.0 345.0 C1157.5 343.8 1187.5 339.2 1195.0 338.0" fill="none" stroke="#fa8072" stroke-width="0.9" stroke-linejoin="round" stroke-linecap="round" stroke-dasharray="2 2"/>
<path d="M1146.0 362.0 C1155.0 360.3 1191.0 353.7 1200.0 352.0" fill="none" stroke="#fa8072" stroke-width="0.9" stroke-linejoin="round" stroke-linecap="round" stroke-dasharray="2 2"/>
<path d="M1155.0 392.0 C1163.3 389.7 1196.7 380.3 1205.0 378.0" fill="none" stroke="#fa8072" stroke-width="0.9" stroke-linejoin="round" stroke-linecap="round" stroke-dasharray="2 2"/>
<path d="M1160.0 420.0 C1166.7 418.0 1193.3 410.0 1200.0 408.0" fill="none" stroke="#fa8072" stroke-width="0.9" stroke-linejoin="round" stroke-linecap="round" stroke-dasharray="2 2"/>
<path d="M1172.0 448.0 C1179.2 446.0 1207.8 438.0 1215.0 436.0" fill="none" stroke="#fa8072" stroke-width="0.9" stroke-linejoin="round" stroke-linecap="round" stroke-dasharray="2 2"/>
<path d="M1160.0 350.0 C1162.5 358.3 1170.0 384.2 1175.0 400.0 C1180.0 415.8 1187.5 437.5 1190.0 445.0" fill="none" stroke="#fa8072" stroke-width="0.9" stroke-linejoin="round" stroke-linecap="round" stroke-dasharray="2 2"/>
<path d="M1180.0 345.0 C1182.5 353.3 1190.0 379.2 1195.0 395.0 C1200.0 410.8 1207.5 432.5 1210.0 440.0" fill="none" stroke="#fa8072" stroke-width="0.9" stroke-linejoin="round" stroke-linecap="round" stroke-dasharray="2 2"/>
<path d="M1178.0 492.0 C1190.0 489.7 1238.0 480.3 1250.0 478.0" fill="none" stroke="#fa8072" stroke-width="0.9" stroke-linejoin="round" stroke-linecap="round" stroke-dasharray="2 2"/>
<path d="M1185.0 522.0 C1196.7 519.2 1235.8 509.0 1255.0 505.0 C1274.2 501.0 1292.5 499.2 1300.0 498.0" fill="none" stroke="#fa8072" stroke-width="0.9" stroke-linejoin="round" stroke-linecap="round" stroke-dasharray="2 2"/>
<path d="M1195.0 548.0 C1204.2 545.8 1232.5 536.3 1250.0 535.0 C1267.5 533.7 1291.7 539.2 1300.0 540.0" fill="none" stroke="#fa8072" stroke-width="0.9" stroke-linejoin="round" stroke-linecap="round" stroke-dasharray="2 2"/>
<path d="M1210.0 572.0 C1216.7 570.0 1235.0 560.7 1250.0 560.0 C1265.0 559.3 1291.7 566.7 1300.0 568.0" fill="none" stroke="#fa8072" stroke-width="0.9" stroke-linejoin="round" stroke-linecap="round" stroke-dasharray="2 2"/>
<path d="M1195.0 480.0 C1197.5 488.3 1205.0 514.2 1210.0 530.0 C1215.0 545.8 1222.5 567.5 1225.0 575.0" fill="none" stroke="#fa8072" stroke-width="0.9" stroke-linejoin="round" stroke-linecap="round" stroke-dasharray="2 2"/>
<path d="M1225.0 485.0 C1227.5 492.5 1233.8 514.2 1240.0 530.0 C1246.2 545.8 1258.3 571.7 1262.0 580.0" fill="none" stroke="#fa8072" stroke-width="0.9" stroke-linejoin="round" stroke-linecap="round" stroke-dasharray="2 2"/>
<path d="M1260.0 490.0 C1262.5 498.3 1268.3 527.5 1275.0 540.0 C1281.7 552.5 1295.8 560.8 1300.0 565.0" fill="none" stroke="#fa8072" stroke-width="0.9" stroke-linejoin="round" stroke-linecap="round" stroke-dasharray="2 2"/>
<path d="M1230.0 545.0 C1236.7 540.8 1258.3 527.5 1270.0 520.0 C1281.7 512.5 1295.0 503.3 1300.0 500.0" fill="none" stroke="#fa8072" stroke-width="0.9" stroke-linejoin="round" stroke-linecap="round" stroke-dasharray="2 2"/>
<path d="M1240.0 560.0 C1245.8 560.0 1265.0 562.5 1275.0 560.0 C1285.0 557.5 1295.8 547.5 1300.0 545.0" fill="none" stroke="#fa8072" stroke-width="0.9" stroke-linejoin="round" stroke-linecap="round" stroke-dasharray="2 2"/>
<path d="M1310.0 495.0 C1316.7 493.3 1340.8 484.2 1350.0 485.0 C1359.2 485.8 1363.0 490.8 1365.0 500.0 C1367.0 509.2 1366.2 532.5 1362.0 540.0 C1357.8 547.5 1343.7 544.2 1340.0 545.0" fill="none" stroke="#fa8072" stroke-width="0.9" stroke-linejoin="round" stroke-linecap="round" stroke-dasharray="2 2"/>
<path d="M1320.0 560.0 C1328.3 559.2 1361.7 555.8 1370.0 555.0" fill="none" stroke="#fa8072" stroke-width="0.9" stroke-linejoin="round" stroke-linecap="round" stroke-dasharray="2 2"/>
<path d="M1330.0 575.0 C1337.0 573.8 1365.0 569.2 1372.0 568.0" fill="none" stroke="#fa8072" stroke-width="0.9" stroke-linejoin="round" stroke-linecap="round" stroke-dasharray="2 2"/>
<path d="M1090.0 430.0 C1093.3 436.7 1105.8 455.0 1110.0 470.0 C1114.2 485.0 1110.8 504.2 1115.0 520.0 C1119.2 535.8 1131.7 557.5 1135.0 565.0" fill="none" stroke="#fa8072" stroke-width="0.9" stroke-linejoin="round" stroke-linecap="round" stroke-dasharray="2 2"/>
<path d="M1100.0 500.0 C1106.7 498.3 1133.3 491.7 1140.0 490.0" fill="none" stroke="#fa8072" stroke-width="0.9" stroke-linejoin="round" stroke-linecap="round" stroke-dasharray="2 2"/>
<path d="M1120.0 530.0 C1126.7 528.3 1153.3 521.7 1160.0 520.0" fill="none" stroke="#fa8072" stroke-width="0.9" stroke-linejoin="round" stroke-linecap="round" stroke-dasharray="2 2"/>
<path d="M1060.0 350.0 C1063.3 349.2 1071.7 345.0 1080.0 345.0 C1088.3 345.0 1105.0 349.2 1110.0 350.0" fill="none" stroke="#fa8072" stroke-width="0.9" stroke-linejoin="round" stroke-linecap="round" stroke-dasharray="2 2"/>
<path d="M1075.0 365.0 C1082.5 363.3 1112.5 356.7 1120.0 355.0" fill="none" stroke="#fa8072" stroke-width="0.9" stroke-linejoin="round" stroke-linecap="round" stroke-dasharray="2 2"/>
<path d="M1095.0 400.0 C1100.8 398.3 1124.2 391.7 1130.0 390.0" fill="none" stroke="#fa8072" stroke-width="0.9" stroke-linejoin="round" stroke-linecap="round" stroke-dasharray="2 2"/>
<path d="M1215.0 345.0 C1217.5 350.8 1224.2 367.5 1230.0 380.0 C1235.8 392.5 1246.7 413.3 1250.0 420.0" fill="none" stroke="#fa8072" stroke-width="0.9" stroke-linejoin="round" stroke-linecap="round" stroke-dasharray="2 2"/>
<path d="M1245.0 425.0 C1250.8 424.8 1274.2 424.2 1280.0 424.0" fill="none" stroke="#fa8072" stroke-width="0.9" stroke-linejoin="round" stroke-linecap="round" stroke-dasharray="2 2"/>
<path d="M1395.0 612.0 C1399.2 606.7 1412.5 592.0 1420.0 580.0 C1427.5 568.0 1435.8 552.5 1440.0 540.0 C1444.2 527.5 1442.5 513.7 1445.0 505.0 C1447.5 496.3 1453.3 490.8 1455.0 488.0" fill="none" stroke="#fa8072" stroke-width="0.9" stroke-linejoin="round" stroke-linecap="round" stroke-dasharray="2 2"/>
<path d="M1300.0 475.0 C1308.3 474.2 1341.7 470.8 1350.0 470.0" fill="none" stroke="#fa8072" stroke-width="0.9" stroke-linejoin="round" stroke-linecap="round" stroke-dasharray="2 2"/>
<path d="M1280.0 440.0 C1286.7 441.7 1309.2 446.3 1320.0 450.0 C1330.8 453.7 1340.8 460.0 1345.0 462.0" fill="none" stroke="#fa8072" stroke-width="0.9" stroke-linejoin="round" stroke-linecap="round" stroke-dasharray="2 2"/>
<path d="M905.0 350.0 C909.2 349.2 920.8 345.0 930.0 345.0 C939.2 345.0 950.0 347.8 960.0 350.0 C970.0 352.2 980.0 357.0 990.0 358.0 C1000.0 359.0 1010.8 355.7 1020.0 356.0 C1029.2 356.3 1040.8 359.3 1045.0 360.0" fill="none" stroke="#fa8072" stroke-width="0.9" stroke-linejoin="round" stroke-linecap="round" stroke-dasharray="2 2"/>
<path d="M900.0 360.0 C903.3 364.2 912.5 378.3 920.0 385.0 C927.5 391.7 935.8 397.8 945.0 400.0 C954.2 402.2 964.2 400.5 975.0 398.0 C985.8 395.5 999.2 388.0 1010.0 385.0 C1020.8 382.0 1032.0 378.3 1040.0 380.0 C1048.0 381.7 1055.0 392.5 1058.0 395.0" fill="none" stroke="#fa8072" stroke-width="0.9" stroke-linejoin="round" stroke-linecap="round" stroke-dasharray="2 2"/>
<path d="M925.0 345.0 C925.8 350.0 928.3 364.2 930.0 375.0 C931.7 385.8 931.7 400.8 935.0 410.0 C938.3 419.2 942.5 428.3 950.0 430.0 C957.5 431.7 970.0 423.3 980.0 420.0 C990.0 416.7 1000.0 412.5 1010.0 410.0 C1020.0 407.5 1031.7 405.0 1040.0 405.0 C1048.3 405.0 1056.7 409.2 1060.0 410.0" fill="none" stroke="#fa8072" stroke-width="0.9" stroke-linejoin="round" stroke-linecap="round" stroke-dasharray="2 2"/>
<path d="M960.0 352.0 C960.8 357.5 962.5 373.7 965.0 385.0 C967.5 396.3 971.7 410.0 975.0 420.0 C978.3 430.0 980.8 438.3 985.0 445.0 C989.2 451.7 997.5 457.5 1000.0 460.0" fill="none" stroke="#fa8072" stroke-width="0.9" stroke-linejoin="round" stroke-linecap="round" stroke-dasharray="2 2"/>
<path d="M1020.0 356.0 C1020.8 360.8 1023.3 376.0 1025.0 385.0 C1026.7 394.0 1028.3 400.8 1030.0 410.0 C1031.7 419.2 1035.0 431.7 1035.0 440.0 C1035.0 448.3 1030.8 456.7 1030.0 460.0" fill="none" stroke="#fa8072" stroke-width="0.9" stroke-linejoin="round" stroke-linecap="round" stroke-dasharray="2 2"/>
<path d="M1040.0 380.0 C1041.7 386.7 1047.5 408.3 1050.0 420.0 C1052.5 431.7 1053.3 440.0 1055.0 450.0 C1056.7 460.0 1059.2 475.0 1060.0 480.0" fill="none" stroke="#fa8072" stroke-width="0.9" stroke-linejoin="round" stroke-linecap="round" stroke-dasharray="2 2"/>
<path d="M945.0 400.0 C946.7 405.0 949.2 423.3 955.0 430.0 C960.8 436.7 970.8 439.2 980.0 440.0 C989.2 440.8 1000.0 435.0 1010.0 435.0 C1020.0 435.0 1030.0 438.3 1040.0 440.0 C1050.0 441.7 1065.0 444.2 1070.0 445.0" fill="none" stroke="#fa8072" stroke-width="0.9" stroke-linejoin="round" stroke-linecap="round" stroke-dasharray="2 2"/>
<path d="M990.0 358.0 C991.7 361.7 999.2 373.3 1000.0 380.0 C1000.8 386.7 995.8 395.0 995.0 398.0" fill="none" stroke="#fa8072" stroke-width="0.9" stroke-linejoin="round" stroke-linecap="round" stroke-dasharray="2 2"/>
<path d="M1010.0 385.0 C1011.7 386.7 1015.8 393.8 1020.0 395.0 C1024.2 396.2 1031.7 394.5 1035.0 392.0 C1038.3 389.5 1039.2 382.0 1040.0 380.0" fill="none" stroke="#fa8072" stroke-width="0.9" stroke-linejoin="round" stroke-linecap="round" stroke-dasharray="2 2"/>
<path d="M985.0 445.0 C989.2 445.8 1001.7 450.8 1010.0 450.0 C1018.3 449.2 1030.8 441.7 1035.0 440.0" fill="none" stroke="#fa8072" stroke-width="0.9" stroke-linejoin="round" stroke-linecap="round" stroke-dasharray="2 2"/>
<path d="M1000.0 500.0 C1005.0 499.2 1020.0 494.2 1030.0 495.0 C1040.0 495.8 1050.8 504.2 1060.0 505.0 C1069.2 505.8 1080.8 500.8 1085.0 500.0" fill="none" stroke="#fa8072" stroke-width="0.9" stroke-linejoin="round" stroke-linecap="round" stroke-dasharray="2 2"/>
<path d="M1005.0 520.0 C1010.8 519.2 1029.2 514.2 1040.0 515.0 C1050.8 515.8 1060.8 521.7 1070.0 525.0 C1079.2 528.3 1090.8 533.3 1095.0 535.0" fill="none" stroke="#fa8072" stroke-width="0.9" stroke-linejoin="round" stroke-linecap="round" stroke-dasharray="2 2"/>
<path d="M1030.0 495.0 C1031.7 498.3 1036.7 507.5 1040.0 515.0 C1043.3 522.5 1048.3 535.8 1050.0 540.0" fill="none" stroke="#fa8072" stroke-width="0.9" stroke-linejoin="round" stroke-linecap="round" stroke-dasharray="2 2"/>
<path d="M1060.0 505.0 C1060.8 509.2 1062.5 522.5 1065.0 530.0 C1067.5 537.5 1073.3 546.7 1075.0 550.0" fill="none" stroke="#fa8072" stroke-width="0.9" stroke-linejoin="round" stroke-linecap="round" stroke-dasharray="2 2"/>
<path d="M1010.0 505.0 C1011.7 506.2 1019.2 509.2 1020.0 512.0 C1020.8 514.8 1015.8 520.3 1015.0 522.0" fill="none" stroke="#fa8072" stroke-width="0.9" stroke-linejoin="round" stroke-linecap="round" stroke-dasharray="2 2"/>
<path d="M880.0 440.0 C883.3 440.8 891.7 440.0 900.0 445.0 C908.3 450.0 920.0 460.8 930.0 470.0 C940.0 479.2 955.0 495.0 960.0 500.0" fill="none" stroke="#fa8072" stroke-width="0.9" stroke-linejoin="round" stroke-linecap="round" stroke-dasharray="2 2"/>
<path d="M965.0 560.0 C968.3 565.0 979.2 580.8 985.0 590.0 C990.8 599.2 997.5 610.8 1000.0 615.0" fill="none" stroke="#fa8072" stroke-width="0.9" stroke-linejoin="round" stroke-linecap="round" stroke-dasharray="2 2"/>
<path d="M975.0 560.0 C979.2 563.3 994.2 573.3 1000.0 580.0 C1005.8 586.7 1008.3 596.7 1010.0 600.0" fill="none" stroke="#fa8072" stroke-width="0.9" stroke-linejoin="round" stroke-linecap="round" stroke-dasharray="2 2"/>
<path d="M985.0 600.0 C980.8 603.3 967.5 614.0 960.0 620.0 C952.5 626.0 943.3 633.3 940.0 636.0" fill="none" stroke="#fa8072" stroke-width="0.9" stroke-linejoin="round" stroke-linecap="round" stroke-dasharray="2 2"/>
<path d="M832.0 484.0 C832.0 496.7 831.5 542.3 832.0 560.0 C832.5 577.7 834.5 585.0 835.0 590.0" fill="none" stroke="#fa8072" stroke-width="0.9" stroke-linejoin="round" stroke-linecap="round" stroke-dasharray="2 2"/>
<path d="M871.0 486.0 C871.8 500.0 875.7 545.0 876.0 570.0 C876.3 595.0 873.5 625.0 873.0 636.0" fill="none" stroke="#fa8072" stroke-width="0.9" stroke-linejoin="round" stroke-linecap="round" stroke-dasharray="2 2"/>
<path d="M848.0 540.0 C852.0 539.7 868.0 538.3 872.0 538.0" fill="none" stroke="#fa8072" stroke-width="0.9" stroke-linejoin="round" stroke-linecap="round" stroke-dasharray="2 2"/>
<path d="M850.0 556.0 C853.8 556.0 869.2 556.0 873.0 556.0" fill="none" stroke="#fa8072" stroke-width="0.9" stroke-linejoin="round" stroke-linecap="round" stroke-dasharray="2 2"/>
<path d="M741.0 336.0 C745.0 341.3 755.5 356.7 765.0 368.0 C774.5 379.3 792.5 398.0 798.0 404.0" fill="none" stroke="#fa8072" stroke-width="0.9" stroke-linejoin="round" stroke-linecap="round" stroke-dasharray="2 2"/>
<path d="M776.0 336.0 C780.0 341.0 794.0 358.5 800.0 366.0 C806.0 373.5 810.0 378.5 812.0 381.0" fill="none" stroke="#fa8072" stroke-width="0.9" stroke-linejoin="round" stroke-linecap="round" stroke-dasharray="2 2"/>
<path d="M938.0 336.0 C937.5 338.3 936.3 345.2 935.0 350.0 C933.7 354.8 929.5 359.2 930.0 365.0 C930.5 370.8 938.3 375.8 938.0 385.0 C937.7 394.2 929.7 414.2 928.0 420.0" fill="none" stroke="#2a2af0" stroke-width="1" stroke-linejoin="round" stroke-linecap="round" stroke-dasharray="2.2 2.8"/>
<path d="M928.0 420.0 C932.2 422.0 945.2 427.7 953.0 432.0 C960.8 436.3 968.0 441.0 975.0 446.0 C982.0 451.0 991.7 459.3 995.0 462.0" fill="none" stroke="#2a2af0" stroke-width="1" stroke-linejoin="round" stroke-linecap="round" stroke-dasharray="2.2 2.8"/>
<path d="M1022.0 356.0 C1025.0 360.0 1035.7 369.3 1040.0 380.0 C1044.3 390.7 1046.0 405.0 1048.0 420.0 C1050.0 435.0 1050.0 453.3 1052.0 470.0 C1054.0 486.7 1057.7 505.0 1060.0 520.0 C1062.3 535.0 1065.0 553.3 1066.0 560.0" fill="none" stroke="#2a2af0" stroke-width="1" stroke-linejoin="round" stroke-linecap="round" stroke-dasharray="2.2 2.8"/>
<path d="M1040.0 380.0 C1039.2 372.7 1035.8 343.3 1035.0 336.0" fill="none" stroke="#2a2af0" stroke-width="1" stroke-linejoin="round" stroke-linecap="round" stroke-dasharray="2.2 2.8"/>
<path d="M1048.0 420.0 C1050.8 423.3 1060.0 436.2 1065.0 440.0 C1070.0 443.8 1075.8 442.5 1078.0 443.0" fill="none" stroke="#2a2af0" stroke-width="1" stroke-linejoin="round" stroke-linecap="round" stroke-dasharray="2.2 2.8"/>
<path d="M1052.0 470.0 C1048.3 467.5 1037.0 459.2 1030.0 455.0 C1023.0 450.8 1013.3 446.7 1010.0 445.0" fill="none" stroke="#2a2af0" stroke-width="1" stroke-linejoin="round" stroke-linecap="round" stroke-dasharray="2.2 2.8"/>
<path d="M1060.0 520.0 C1065.0 519.7 1085.0 518.3 1090.0 518.0" fill="none" stroke="#2a2af0" stroke-width="1" stroke-linejoin="round" stroke-linecap="round" stroke-dasharray="2.2 2.8"/>
<path d="M1005.0 515.0 C1010.8 518.3 1025.5 528.2 1040.0 535.0 C1054.5 541.8 1078.7 550.2 1092.0 556.0 C1105.3 561.8 1111.5 567.0 1120.0 570.0 C1128.5 573.0 1139.2 573.3 1143.0 574.0" fill="none" stroke="#2a2af0" stroke-width="1" stroke-linejoin="round" stroke-linecap="round" stroke-dasharray="2.2 2.8"/>
<path d="M900.0 450.0 C905.0 453.3 920.0 461.7 930.0 470.0 C940.0 478.3 950.8 489.2 960.0 500.0 C969.2 510.8 978.3 525.7 985.0 535.0 C991.7 544.3 990.8 546.8 1000.0 556.0 C1009.2 565.2 1026.7 580.2 1040.0 590.0 C1053.3 599.8 1067.5 607.3 1080.0 615.0 C1092.5 622.7 1109.2 632.5 1115.0 636.0" fill="none" stroke="#2a2af0" stroke-width="1" stroke-linejoin="round" stroke-linecap="round" stroke-dasharray="2.2 2.8"/>
<path d="M745.0 336.0 C747.0 338.3 755.0 347.7 757.0 350.0" fill="none" stroke="#2a2af0" stroke-width="1" stroke-linejoin="round" stroke-linecap="round" stroke-dasharray="2.2 2.8"/>
<path d="M783.0 336.0 C785.8 340.3 797.2 357.7 800.0 362.0" fill="none" stroke="#2a2af0" stroke-width="1" stroke-linejoin="round" stroke-linecap="round" stroke-dasharray="2.2 2.8"/>
<path d="M723.0 494.0 C724.2 492.3 727.8 486.0 730.0 484.0 C732.2 482.0 732.3 486.6 736.0 482.0 C739.7 477.4 745.8 465.0 752.0 456.5 C758.2 448.0 766.7 437.8 773.0 431.0 C779.3 424.2 782.5 422.4 790.0 416.0 C797.5 409.6 811.5 396.8 817.7 392.6 C823.9 388.4 825.5 391.3 827.0 391.0" fill="none" stroke="#ffffff" stroke-width="7.5" stroke-linejoin="round" stroke-linecap="round" />
<path d="M723.0 406.5 C727.8 407.2 743.7 408.4 752.0 411.0 C760.3 413.6 769.5 420.2 773.0 422.0" fill="none" stroke="#ffffff" stroke-width="5" stroke-linejoin="round" stroke-linecap="round" />
<path d="M773.0 422.0 C776.2 427.2 788.5 446.3 792.0 453.0 C795.5 459.7 793.7 460.5 794.0 462.0" fill="none" stroke="#ffffff" stroke-width="3.5" stroke-linejoin="round" stroke-linecap="round" />
<path d="M797.0 424.0 C799.5 427.5 807.7 439.3 812.0 445.0 C816.3 450.7 821.2 455.8 823.0 458.0" fill="none" stroke="#ffffff" stroke-width="3.5" stroke-linejoin="round" stroke-linecap="round" />
<circle cx="823" cy="458" r="3.2" fill="#fff"/>
<path d="M836.0 336.0 C837.1 338.3 839.3 341.3 842.5 350.0 C845.7 358.7 849.3 377.7 855.0 388.0 C860.7 398.3 871.6 404.8 876.7 411.9 C881.8 418.9 883.6 425.9 885.4 430.3 C887.2 434.7 887.1 436.7 887.4 438.0" fill="none" stroke="#ffffff" stroke-width="7.5" stroke-linejoin="round" stroke-linecap="round" />
<path d="M842.5 356.6 C845.8 354.8 855.6 349.4 862.0 346.0 C868.4 342.6 877.8 337.7 881.0 336.0" fill="none" stroke="#ffffff" stroke-width="5" stroke-linejoin="round" stroke-linecap="round" />
<path d="M881.0 336.0 C883.7 341.0 891.3 354.0 897.0 366.0 C902.7 378.0 909.2 397.2 915.0 408.0 C920.8 418.8 927.0 424.5 932.0 431.0 C937.0 437.5 942.8 444.3 945.0 447.0" fill="none" stroke="#ffffff" stroke-width="3.5" stroke-linejoin="round" stroke-linecap="round" />
<path d="M867.0 397.0 C870.2 394.5 882.8 384.5 886.0 382.0" fill="none" stroke="#ffffff" stroke-width="3.5" stroke-linejoin="round" stroke-linecap="round" />
<path d="M889.0 427.0 C894.2 425.0 914.8 417.0 920.0 415.0" fill="none" stroke="#ffffff" stroke-width="3.5" stroke-linejoin="round" stroke-linecap="round" />
<path d="M723.0 488.0 C735.5 487.8 785.5 486.8 798.0 486.5" fill="none" stroke="#ffffff" stroke-width="3.5" stroke-linejoin="round" stroke-linecap="round" />
<path d="M730.0 497.0 C733.3 501.7 745.0 516.2 750.0 525.0 C755.0 533.8 758.2 542.5 760.0 550.0 C761.8 557.5 759.3 563.8 761.0 570.0 C762.7 576.2 768.3 576.0 770.0 587.0 C771.7 598.0 770.8 627.8 771.0 636.0" fill="none" stroke="#ffffff" stroke-width="3.5" stroke-linejoin="round" stroke-linecap="round" />
<path d="M793.0 489.0 C794.2 493.3 798.2 507.5 800.0 515.0 C801.8 522.5 799.7 532.3 804.0 534.0 C808.3 535.7 822.3 526.5 826.0 525.0" fill="none" stroke="#ffffff" stroke-width="3" stroke-linejoin="round" stroke-linecap="round" />
<circle cx="827" cy="525" r="3.2" fill="#fff"/>
<path d="M804.0 534.0 C801.7 537.7 797.2 550.0 790.0 556.0 C782.8 562.0 765.8 567.7 761.0 570.0" fill="none" stroke="#ffffff" stroke-width="3" stroke-linejoin="round" stroke-linecap="round" />
<path d="M723.0 576.0 C729.3 575.7 744.5 574.5 761.0 574.0 C777.5 573.5 802.7 573.7 822.0 573.0 C841.3 572.3 867.8 570.5 877.0 570.0" fill="none" stroke="#ffffff" stroke-width="3.5" stroke-linejoin="round" stroke-linecap="round" />
<path d="M723.0 600.0 C729.2 600.8 749.5 603.7 760.0 605.0 C770.5 606.3 777.7 609.5 786.0 608.0 C794.3 606.5 803.8 600.2 810.0 596.0 C816.2 591.8 818.7 588.5 823.0 583.0 C827.3 577.5 831.7 566.5 836.0 563.0 C840.3 559.5 847.0 568.3 849.0 562.0 C851.0 555.7 848.2 531.2 848.0 525.0" fill="none" stroke="#ffffff" stroke-width="3.2" stroke-linejoin="round" stroke-linecap="round" />
<path d="M723.0 610.0 C730.8 610.8 762.2 614.2 770.0 615.0" fill="none" stroke="#ffffff" stroke-width="3" stroke-linejoin="round" stroke-linecap="round" />
<path d="M796.0 608.0 C796.0 612.7 796.0 631.3 796.0 636.0" fill="none" stroke="#ffffff" stroke-width="3" stroke-linejoin="round" stroke-linecap="round" />
<path d="M876.0 570.0 C875.3 581.0 872.7 625.0 872.0 636.0" fill="none" stroke="#ffffff" stroke-width="3" stroke-linejoin="round" stroke-linecap="round" />
<path d="M770.0 587.0 C773.3 586.3 785.8 587.5 790.0 583.0 C794.2 578.5 790.8 564.5 795.0 560.0 C799.2 555.5 810.8 558.5 815.0 556.0 C819.2 553.5 819.2 546.8 820.0 545.0" fill="none" stroke="#ffffff" stroke-width="2.5" stroke-linejoin="round" stroke-linecap="round" />
<path d="M1044.0 336.0 C1049.7 343.5 1069.5 368.9 1078.3 381.1 C1087.1 393.3 1091.2 399.9 1096.6 409.0 C1102.0 418.1 1106.4 428.3 1110.6 436.0 C1114.8 443.7 1118.3 449.3 1122.0 455.0 C1125.7 460.7 1129.9 462.1 1133.0 470.0 C1136.1 477.9 1138.3 491.5 1140.5 502.2 C1142.7 512.9 1144.3 523.1 1145.9 534.4 C1147.5 545.7 1149.5 562.4 1150.0 570.0 C1150.5 577.6 1142.8 572.6 1149.2 579.8 C1155.6 587.0 1181.8 607.7 1188.3 613.3" fill="none" stroke="#ffffff" stroke-width="6.8" stroke-linejoin="round" stroke-linecap="round" />
<path d="M1110.6 436.0 C1110.8 441.7 1110.8 457.5 1111.5 470.0 C1112.2 482.5 1114.4 500.8 1114.7 510.8 C1115.0 520.8 1111.9 525.1 1113.6 530.0 C1115.3 534.9 1119.9 537.5 1125.0 540.0 C1130.1 542.5 1140.8 544.2 1144.0 545.0" fill="none" stroke="#ffffff" stroke-width="4.2" stroke-linejoin="round" stroke-linecap="round" />
<path d="M1149.2 579.8 C1145.9 583.3 1132.9 597.3 1129.6 600.8" fill="none" stroke="#ffffff" stroke-width="6.5" stroke-linejoin="round" stroke-linecap="round" />
<path d="M1124.5 336.0 C1125.9 341.4 1129.9 357.5 1133.1 368.2 C1136.3 378.9 1141.1 391.4 1143.9 400.4 C1146.7 409.4 1146.7 411.6 1150.0 422.0 C1153.3 432.4 1160.5 452.7 1164.0 463.0 C1167.5 473.3 1167.4 476.2 1171.0 484.0 C1174.6 491.8 1181.2 501.0 1185.5 510.0 C1189.8 519.0 1193.3 528.6 1196.6 537.9 C1199.8 547.2 1203.1 557.4 1205.0 565.8 C1206.9 574.2 1208.7 580.8 1207.8 588.2 C1206.9 595.7 1201.7 605.4 1199.4 610.5 C1197.1 615.6 1194.9 617.6 1194.0 619.0" fill="none" stroke="#ffffff" stroke-width="8.6" stroke-linejoin="round" stroke-linecap="round" />
<circle cx="1133.5" cy="368.2" r="6" fill="#fff"/>
<path d="M1133.5 368.2 C1142.9 365.2 1175.2 355.4 1190.0 350.0 C1204.8 344.6 1216.7 338.3 1222.0 336.0" fill="none" stroke="#ffffff" stroke-width="5" stroke-linejoin="round" stroke-linecap="round" />
<path d="M1222.0 336.0 C1223.2 338.3 1225.5 344.2 1229.0 350.0 C1232.5 355.8 1235.5 364.0 1243.0 371.0 C1250.5 378.0 1267.8 384.2 1274.0 392.0 C1280.2 399.8 1277.3 412.2 1280.0 418.0 C1282.7 423.8 1278.2 419.5 1290.0 427.0 C1301.8 434.5 1338.0 453.5 1351.0 463.0 C1364.0 472.5 1363.7 469.5 1368.0 484.0 C1372.3 498.5 1375.2 530.7 1377.0 550.0 C1378.8 569.3 1376.7 589.2 1378.5 600.0 C1380.3 610.8 1384.4 609.0 1388.0 615.0 C1391.6 621.0 1398.0 632.5 1400.0 636.0" fill="none" stroke="#ffffff" stroke-width="4.2" stroke-linejoin="round" stroke-linecap="round" />
<path d="M1100.0 478.0 C1105.5 478.0 1122.7 479.3 1133.0 478.0 C1143.3 476.7 1148.0 474.2 1162.0 470.0 C1176.0 465.8 1204.3 458.5 1217.0 453.0 C1229.7 447.5 1230.5 442.5 1238.0 437.0 C1245.5 431.5 1258.0 422.8 1262.0 420.0" fill="none" stroke="#ffffff" stroke-width="3.6" stroke-linejoin="round" stroke-linecap="round" />
<path d="M1154.0 524.0 C1162.3 521.2 1187.3 512.0 1204.0 507.5 C1220.7 503.0 1238.7 501.2 1254.0 497.0 C1269.3 492.8 1281.0 487.7 1296.0 482.5 C1311.0 477.3 1333.0 470.9 1344.0 466.0 C1355.0 461.1 1359.0 455.2 1362.0 453.0" fill="none" stroke="#ffffff" stroke-width="4" stroke-linejoin="round" stroke-linecap="round" />
<path d="M1200.0 613.0 C1210.5 610.8 1241.8 603.8 1263.0 600.0 C1284.2 596.2 1315.7 593.7 1327.0 590.0 C1338.3 586.3 1323.2 581.0 1331.0 578.0 C1338.8 575.0 1366.8 573.0 1374.0 572.0" fill="none" stroke="#ffffff" stroke-width="3.2" stroke-linejoin="round" stroke-linecap="round" />
<path d="M1206.5 621.5 C1217.6 620.7 1245.4 619.6 1273.0 616.5 C1300.6 613.4 1352.8 603.2 1372.0 603.0 C1391.2 602.8 1385.3 613.0 1388.0 615.0" fill="none" stroke="#ffffff" stroke-width="3.2" stroke-linejoin="round" stroke-linecap="round" />
<path d="M1210.0 576.6 C1218.2 577.4 1244.7 583.2 1259.0 581.6 C1273.3 580.0 1288.5 573.3 1296.0 566.7 C1303.5 560.1 1305.2 555.8 1304.0 542.0 C1302.8 528.2 1291.5 493.7 1289.0 484.0" fill="none" stroke="#ffffff" stroke-width="3.2" stroke-linejoin="round" stroke-linecap="round" />
<path d="M1304.0 542.0 C1309.8 540.3 1331.0 536.2 1339.0 532.0 C1347.0 527.8 1350.3 525.0 1352.0 517.0 C1353.7 509.0 1349.5 489.5 1349.0 484.0" fill="none" stroke="#ffffff" stroke-width="3" stroke-linejoin="round" stroke-linecap="round" />
<path d="M1259.0 582.0 C1260.0 585.0 1263.5 594.2 1265.0 600.0 C1266.5 605.8 1267.5 614.2 1268.0 617.0" fill="none" stroke="#ffffff" stroke-width="2.8" stroke-linejoin="round" stroke-linecap="round" />
<path d="M1388.0 600.0 C1393.3 598.3 1413.0 593.3 1420.0 590.0 C1427.0 586.7 1419.8 584.7 1430.0 580.0 C1440.2 575.3 1472.5 565.0 1481.0 562.0" fill="none" stroke="#ffffff" stroke-width="3" stroke-linejoin="round" stroke-linecap="round" />
<path d="M1395.0 612.0 C1402.5 609.3 1425.7 600.5 1440.0 596.0 C1454.3 591.5 1474.2 586.8 1481.0 585.0" fill="none" stroke="#ffffff" stroke-width="2.5" stroke-linejoin="round" stroke-linecap="round" />
<path d="M1105.0 400.0 C1101.7 400.8 1088.3 404.2 1085.0 405.0" fill="none" stroke="#ffffff" stroke-width="3" stroke-linejoin="round" stroke-linecap="round" />
<path d="M1075.1 367.1 C1083.1 363.5 1115.4 349.3 1123.4 345.7" fill="none" stroke="#ffffff" stroke-width="4.4" stroke-linejoin="round" stroke-linecap="round" />
<path d="M1088.0 386.5 C1095.5 384.0 1125.5 373.9 1133.0 371.4" fill="none" stroke="#ffffff" stroke-width="4.4" stroke-linejoin="round" stroke-linecap="round" />
<path d="M1088.0 336.0 C1088.7 338.7 1092.3 347.9 1092.3 352.1 C1092.3 356.3 1088.7 359.5 1088.0 361.0" fill="none" stroke="#ffffff" stroke-width="4.2" stroke-linejoin="round" stroke-linecap="round" />
<path d="M1142.0 390.0 C1135.8 391.7 1111.2 398.3 1105.0 400.0" fill="none" stroke="#ffffff" stroke-width="3" stroke-linejoin="round" stroke-linecap="round" />
<path d="M1150.0 420.0 C1143.3 422.0 1116.7 430.0 1110.0 432.0" fill="none" stroke="#ffffff" stroke-width="3" stroke-linejoin="round" stroke-linecap="round" />
<path d="M1133.0 434.0 C1133.8 438.7 1137.2 457.3 1138.0 462.0" fill="none" stroke="#ffffff" stroke-width="2.5" stroke-linejoin="round" stroke-linecap="round" />
<path d="M1240.0 352.0 C1244.2 353.8 1259.3 360.7 1265.0 363.0 C1270.7 365.3 1272.5 365.5 1274.0 366.0" fill="none" stroke="#ffffff" stroke-width="4.2" stroke-linejoin="round" stroke-linecap="round" />
<path d="M1281.0 393.0 C1287.2 394.5 1311.8 400.5 1318.0 402.0" fill="none" stroke="#ffffff" stroke-width="4.2" stroke-linejoin="round" stroke-linecap="round" />
<path d="M1264.0 340.0 C1260.0 340.8 1245.3 343.3 1240.0 345.0 C1234.7 346.7 1233.3 349.2 1232.0 350.0" fill="none" stroke="#ffffff" stroke-width="3" stroke-linejoin="round" stroke-linecap="round" />
<path d="M1444.0 342.0 C1445.3 341.2 1450.7 337.8 1452.0 337.0" fill="none" stroke="#ffffff" stroke-width="3" stroke-linejoin="round" stroke-linecap="round" />
<path d="M1176.0 540.0 C1182.5 538.0 1208.5 530.0 1215.0 528.0" fill="none" stroke="#ffffff" stroke-width="3" stroke-linejoin="round" stroke-linecap="round" />
<path d="M1186.0 566.0 C1190.0 565.0 1206.0 561.0 1210.0 560.0" fill="none" stroke="#ffffff" stroke-width="3" stroke-linejoin="round" stroke-linecap="round" />
<path d="M1000.0 636.0 C1000.5 633.7 999.7 626.0 1003.0 622.0 C1006.3 618.0 1013.0 613.7 1020.0 612.0 C1027.0 610.3 1039.2 609.8 1045.0 612.0 C1050.8 614.2 1052.5 621.0 1055.0 625.0 C1057.5 629.0 1059.2 634.2 1060.0 636.0" fill="none" stroke="#ffffff" stroke-width="3" stroke-linejoin="round" stroke-linecap="round" />
<path d="M1360.8 336.0 L1388.5 380.4 L1455.8 482.2 L1473.1 530.3 L1481.0 553.0" fill="none" stroke="#8a8a8a" stroke-width="0.7" stroke-linejoin="round" stroke-linecap="round" />
<rect x="1386.3" y="378.2" width="4.4" height="4.4" fill="#fff" stroke="#777" stroke-width=".8"/>
<rect x="1453.6" y="480.0" width="4.4" height="4.4" fill="#fff" stroke="#777" stroke-width=".8"/>
<rect x="1470.8999999999999" y="528.0999999999999" width="4.4" height="4.4" fill="#fff" stroke="#777" stroke-width=".8"/>
<path d="M723.0 475.0 C733.7 473.3 767.5 467.7 787.0 465.0 C806.5 462.3 824.4 460.7 840.0 459.0 C855.6 457.3 870.8 455.5 880.8 454.7 C890.8 453.9 894.5 453.7 900.2 454.2 C905.9 454.7 910.0 456.0 915.2 457.9 C920.4 459.8 926.8 462.5 931.3 465.4 C935.8 468.3 938.6 471.7 942.0 475.1 C945.4 478.5 948.7 482.3 951.7 485.9 C954.7 489.5 957.8 493.8 960.0 496.6 C962.2 499.5 962.8 500.3 965.0 503.0 C967.2 505.7 969.6 508.6 973.1 512.8 C976.6 517.0 980.9 523.4 986.0 528.3 C991.1 533.2 996.4 536.5 1004.0 542.1 C1011.6 547.7 1020.3 554.5 1031.9 561.7 C1043.5 568.9 1059.8 577.7 1073.8 585.4 C1087.8 593.1 1104.1 601.4 1115.7 607.7 C1127.3 614.0 1134.8 618.4 1143.6 623.1 C1152.4 627.8 1164.5 633.9 1168.7 636.0" fill="none" stroke="#6d6d6d" stroke-width="2.6" stroke-linejoin="round" stroke-linecap="round" />
<path d="M723.0 475.0 C733.7 473.3 767.5 467.7 787.0 465.0 C806.5 462.3 824.4 460.7 840.0 459.0 C855.6 457.3 870.8 455.5 880.8 454.7 C890.8 453.9 894.5 453.7 900.2 454.2 C905.9 454.7 910.0 456.0 915.2 457.9 C920.4 459.8 926.8 462.5 931.3 465.4 C935.8 468.3 938.6 471.7 942.0 475.1 C945.4 478.5 948.7 482.3 951.7 485.9 C954.7 489.5 957.8 493.8 960.0 496.6 C962.2 499.5 962.8 500.3 965.0 503.0 C967.2 505.7 969.6 508.6 973.1 512.8 C976.6 517.0 980.9 523.4 986.0 528.3 C991.1 533.2 996.4 536.5 1004.0 542.1 C1011.6 547.7 1020.3 554.5 1031.9 561.7 C1043.5 568.9 1059.8 577.7 1073.8 585.4 C1087.8 593.1 1104.1 601.4 1115.7 607.7 C1127.3 614.0 1134.8 618.4 1143.6 623.1 C1152.4 627.8 1164.5 633.9 1168.7 636.0" fill="none" stroke="#f4f4f4" stroke-width="0.9" stroke-linejoin="round" stroke-linecap="round" stroke-dasharray="4 4.5"/>
<path d="M800.0 465.5 C806.7 464.8 826.5 462.9 840.0 461.5 C853.5 460.1 874.0 457.9 880.8 457.2" fill="none" stroke="#6d6d6d" stroke-width="2.4" stroke-linejoin="round" stroke-linecap="round" />
<path d="M800.0 465.5 C806.7 464.8 826.5 462.9 840.0 461.5 C853.5 460.1 874.0 457.9 880.8 457.2" fill="none" stroke="#f4f4f4" stroke-width="0.9" stroke-linejoin="round" stroke-linecap="round" stroke-dasharray="4 4.5"/>
<path d="M868.0 452.0 L880.0 444.0" fill="none" stroke="#777" stroke-width="0.8" stroke-linejoin="round" stroke-linecap="round" />
<path d="M1002.0 541.0 L1008.0 535.0" fill="none" stroke="#777" stroke-width="0.8" stroke-linejoin="round" stroke-linecap="round" />
<path d="M981.0 578.0 L1003.0 559.0" fill="none" stroke="#666" stroke-width="1.6" stroke-linejoin="round" stroke-linecap="round" />
<path d="M981.0 578.0 L1003.0 559.0" fill="none" stroke="#fff" stroke-width="0.5" stroke-linejoin="round" stroke-linecap="round" />
<path d="M784.0 330.0 C784.8 331.0 784.6 330.0 788.8 336.0 C793.0 342.0 802.6 356.7 809.0 366.0 C815.4 375.3 821.8 384.4 827.4 391.6 C833.0 398.8 837.6 402.9 842.9 409.0 C848.2 415.1 854.3 423.6 859.3 428.4 C864.3 433.1 868.1 435.6 872.8 437.5 C877.5 439.4 882.8 438.4 887.3 439.5 C891.8 440.6 895.4 442.5 900.0 444.0 C904.6 445.5 909.1 446.5 915.2 448.3 C921.3 450.1 930.4 452.4 936.7 454.7 C943.0 457.0 948.4 459.6 952.8 462.2 C957.1 464.8 959.3 467.0 962.8 470.3 C966.3 473.6 970.5 477.1 974.0 482.0 C977.5 486.9 980.9 495.2 983.7 500.0 C986.5 504.8 988.6 507.4 991.0 511.0 C993.4 514.6 995.1 518.0 998.2 521.5 C1001.3 525.0 1005.1 528.6 1009.5 532.2 C1013.9 535.8 1019.3 539.4 1024.5 543.0 C1029.7 546.6 1032.4 548.0 1040.6 553.7 C1048.8 559.4 1061.3 569.4 1073.8 577.0 C1086.3 584.6 1104.1 593.4 1115.7 599.4 C1127.3 605.4 1134.3 609.4 1143.6 613.3 C1152.9 617.1 1163.4 621.5 1171.5 622.5 C1179.6 623.5 1185.4 618.6 1192.4 619.6 C1199.4 620.6 1207.1 626.0 1213.4 628.7 C1219.7 631.4 1225.6 633.8 1230.0 635.7 C1234.4 637.6 1238.3 639.3 1240.0 640.0" fill="none" stroke="#c9a16b" stroke-width="10.6" stroke-linejoin="round" stroke-linecap="round" />
<circle cx="1192.4" cy="619.6" r="8" fill="#c9a16b"/>
<circle cx="887.3" cy="439.5" r="6.4" fill="#c9a16b"/>
<path d="M784.0 330.0 C784.8 331.0 784.6 330.0 788.8 336.0 C793.0 342.0 802.6 356.7 809.0 366.0 C815.4 375.3 821.8 384.4 827.4 391.6 C833.0 398.8 837.6 402.9 842.9 409.0 C848.2 415.1 854.3 423.6 859.3 428.4 C864.3 433.1 868.1 435.6 872.8 437.5 C877.5 439.4 882.8 438.4 887.3 439.5 C891.8 440.6 895.4 442.5 900.0 444.0 C904.6 445.5 909.1 446.5 915.2 448.3 C921.3 450.1 930.4 452.4 936.7 454.7 C943.0 457.0 948.4 459.6 952.8 462.2 C957.1 464.8 959.3 467.0 962.8 470.3 C966.3 473.6 970.5 477.1 974.0 482.0 C977.5 486.9 980.9 495.2 983.7 500.0 C986.5 504.8 988.6 507.4 991.0 511.0 C993.4 514.6 995.1 518.0 998.2 521.5 C1001.3 525.0 1005.1 528.6 1009.5 532.2 C1013.9 535.8 1019.3 539.4 1024.5 543.0 C1029.7 546.6 1032.4 548.0 1040.6 553.7 C1048.8 559.4 1061.3 569.4 1073.8 577.0 C1086.3 584.6 1104.1 593.4 1115.7 599.4 C1127.3 605.4 1134.3 609.4 1143.6 613.3 C1152.9 617.1 1163.4 621.5 1171.5 622.5 C1179.6 623.5 1185.4 618.6 1192.4 619.6 C1199.4 620.6 1207.1 626.0 1213.4 628.7 C1219.7 631.4 1225.6 633.8 1230.0 635.7 C1234.4 637.6 1238.3 639.3 1240.0 640.0" fill="none" stroke="#fcd6a4" stroke-width="9.4" stroke-linejoin="round" stroke-linecap="round" />
<circle cx="1192.4" cy="619.6" r="7.3" fill="#fcd6a4"/>
<circle cx="887.3" cy="439.5" r="5.8" fill="#fcd6a4"/>
<circle cx="1192.7" cy="619.6" r=".9" fill="#8a6a3a"/>
<path d="M786.0 422.0 L816.0 394.0" fill="none" stroke="#333" stroke-width="0.9" stroke-linejoin="round" stroke-linecap="round" />
<path d="M779.0 416.0 L810.0 387.0" fill="none" stroke="#333" stroke-width="0.9" stroke-linejoin="round" stroke-linecap="round" />
<circle cx="809" cy="364" r="3.5" fill="#fff"/>
<g stroke="#8fbf83" stroke-width=".8" fill="none"><ellipse cx="907.4" cy="353" rx="1.9" ry="2.6"/><path d="M907.4 355.6 v3.4 M912.6 359 v-3 M910.6 356 L912.6 350.2 L914.6 356 Z"/></g>
<g stroke="#8fbf83" stroke-width=".8" fill="none"><ellipse cx="939.4" cy="356" rx="1.9" ry="2.6"/><path d="M939.4 358.6 v3.4 M944.6 362 v-3 M942.6 359 L944.6 353.2 L946.6 359 Z"/></g>
<g stroke="#8fbf83" stroke-width=".8" fill="none"><ellipse cx="967.4" cy="366" rx="1.9" ry="2.6"/><path d="M967.4 368.6 v3.4 M972.6 372 v-3 M970.6 369 L972.6 363.2 L974.6 369 Z"/></g>
<g stroke="#8fbf83" stroke-width=".8" fill="none"><ellipse cx="1012.4" cy="360" rx="1.9" ry="2.6"/><path d="M1012.4 362.6 v3.4 M1017.6 366 v-3 M1015.6 363 L1017.6 357.2 L1019.6 363 Z"/></g>
<g stroke="#8fbf83" stroke-width=".8" fill="none"><ellipse cx="1044.4" cy="371" rx="1.9" ry="2.6"/><path d="M1044.4 373.6 v3.4 M1049.6 377 v-3 M1047.6 374 L1049.6 368.2 L1051.6 374 Z"/></g>
<g stroke="#8fbf83" stroke-width=".8" fill="none"><ellipse cx="915.4" cy="388" rx="1.9" ry="2.6"/><path d="M915.4 390.6 v3.4 M920.6 394 v-3 M918.6 391 L920.6 385.2 L922.6 391 Z"/></g>
<g stroke="#8fbf83" stroke-width=".8" fill="none"><ellipse cx="949.4" cy="393" rx="1.9" ry="2.6"/><path d="M949.4 395.6 v3.4 M954.6 399 v-3 M952.6 396 L954.6 390.2 L956.6 396 Z"/></g>
<g stroke="#8fbf83" stroke-width=".8" fill="none"><ellipse cx="992.4" cy="386" rx="1.9" ry="2.6"/><path d="M992.4 388.6 v3.4 M997.6 392 v-3 M995.6 389 L997.6 383.2 L999.6 389 Z"/></g>
<g stroke="#8fbf83" stroke-width=".8" fill="none"><ellipse cx="971.4" cy="412" rx="1.9" ry="2.6"/><path d="M971.4 414.6 v3.4 M976.6 418 v-3 M974.6 415 L976.6 409.2 L978.6 415 Z"/></g>
<g stroke="#8fbf83" stroke-width=".8" fill="none"><ellipse cx="1050.4" cy="410" rx="1.9" ry="2.6"/><path d="M1050.4 412.6 v3.4 M1055.6 416 v-3 M1053.6 413 L1055.6 407.2 L1057.6 413 Z"/></g>
<g stroke="#8fbf83" stroke-width=".8" fill="none"><ellipse cx="1007.4" cy="426" rx="1.9" ry="2.6"/><path d="M1007.4 428.6 v3.4 M1012.6 432 v-3 M1010.6 429 L1012.6 423.2 L1014.6 429 Z"/></g>
<g stroke="#8fbf83" stroke-width=".8" fill="none"><ellipse cx="1032.4" cy="436" rx="1.9" ry="2.6"/><path d="M1032.4 438.6 v3.4 M1037.6 442 v-3 M1035.6 439 L1037.6 433.2 L1039.6 439 Z"/></g>
<g stroke="#8fbf83" stroke-width=".8" fill="none"><ellipse cx="948.4" cy="438" rx="1.9" ry="2.6"/><path d="M948.4 440.6 v3.4 M953.6 444 v-3 M951.6 441 L953.6 435.2 L955.6 441 Z"/></g>
<g stroke="#8fbf83" stroke-width=".8" fill="none"><ellipse cx="980.4" cy="447" rx="1.9" ry="2.6"/><path d="M980.4 449.6 v3.4 M985.6 453 v-3 M983.6 450 L985.6 444.2 L987.6 450 Z"/></g>
<g stroke="#8fbf83" stroke-width=".8" fill="none"><ellipse cx="1066.4" cy="436" rx="1.9" ry="2.6"/><path d="M1066.4 438.6 v3.4 M1071.6 442 v-3 M1069.6 439 L1071.6 433.2 L1073.6 439 Z"/></g>
<g stroke="#8fbf83" stroke-width=".8" fill="none"><ellipse cx="1060.4" cy="468" rx="1.9" ry="2.6"/><path d="M1060.4 470.6 v3.4 M1065.6 474 v-3 M1063.6 471 L1065.6 465.2 L1067.6 471 Z"/></g>
<g stroke="#8fbf83" stroke-width=".8" fill="none"><ellipse cx="982.4" cy="468" rx="1.9" ry="2.6"/><path d="M982.4 470.6 v3.4 M987.6 474 v-3 M985.6 471 L987.6 465.2 L989.6 471 Z"/></g>
<g stroke="#8fbf83" stroke-width=".8" fill="none"><ellipse cx="1012.4" cy="498" rx="1.9" ry="2.6"/><path d="M1012.4 500.6 v3.4 M1017.6 504 v-3 M1015.6 501 L1017.6 495.2 L1019.6 501 Z"/></g>
<g stroke="#8fbf83" stroke-width=".8" fill="none"><ellipse cx="1043.4" cy="498" rx="1.9" ry="2.6"/><path d="M1043.4 500.6 v3.4 M1048.6 504 v-3 M1046.6 501 L1048.6 495.2 L1050.6 501 Z"/></g>
<g stroke="#8fbf83" stroke-width=".8" fill="none"><ellipse cx="1051.4" cy="530" rx="1.9" ry="2.6"/><path d="M1051.4 532.6 v3.4 M1056.6 536 v-3 M1054.6 533 L1056.6 527.2 L1058.6 533 Z"/></g>
<g stroke="#8fbf83" stroke-width=".8" fill="none"><ellipse cx="1073.4" cy="554" rx="1.9" ry="2.6"/><path d="M1073.4 556.6 v3.4 M1078.6 560 v-3 M1076.6 557 L1078.6 551.2 L1080.6 557 Z"/></g>
<g stroke="#8fbf83" stroke-width=".8" fill="none"><ellipse cx="1104.4" cy="581" rx="1.9" ry="2.6"/><path d="M1104.4 583.6 v3.4 M1109.6 587 v-3 M1107.6 584 L1109.6 578.2 L1111.6 584 Z"/></g>
<g stroke="#8fbf83" stroke-width=".8" fill="none"><ellipse cx="882.4" cy="498" rx="1.9" ry="2.6"/><path d="M882.4 500.6 v3.4 M887.6 504 v-3 M885.6 501 L887.6 495.2 L889.6 501 Z"/></g>
<g stroke="#8fbf83" stroke-width=".8" fill="none"><ellipse cx="882.4" cy="530" rx="1.9" ry="2.6"/><path d="M882.4 532.6 v3.4 M887.6 536 v-3 M885.6 533 L887.6 527.2 L889.6 533 Z"/></g>
<g stroke="#8fbf83" stroke-width=".8" fill="none"><ellipse cx="900.4" cy="533" rx="1.9" ry="2.6"/><path d="M900.4 535.6 v3.4 M905.6 539 v-3 M903.6 536 L905.6 530.2 L907.6 536 Z"/></g>
<g stroke="#8fbf83" stroke-width=".8" fill="none"><ellipse cx="912.4" cy="558" rx="1.9" ry="2.6"/><path d="M912.4 560.6 v3.4 M917.6 564 v-3 M915.6 561 L917.6 555.2 L919.6 561 Z"/></g>
<g stroke="#8fbf83" stroke-width=".8" fill="none"><ellipse cx="927.4" cy="588" rx="1.9" ry="2.6"/><path d="M927.4 590.6 v3.4 M932.6 594 v-3 M930.6 591 L932.6 585.2 L934.6 591 Z"/></g>
<g stroke="#8fbf83" stroke-width=".8" fill="none"><ellipse cx="877.4" cy="588" rx="1.9" ry="2.6"/><path d="M877.4 590.6 v3.4 M882.6 594 v-3 M880.6 591 L882.6 585.2 L884.6 591 Z"/></g>
<g stroke="#8fbf83" stroke-width=".8" fill="none"><ellipse cx="902.4" cy="618" rx="1.9" ry="2.6"/><path d="M902.4 620.6 v3.4 M907.6 624 v-3 M905.6 621 L907.6 615.2 L909.6 621 Z"/></g>
<g stroke="#8fbf83" stroke-width=".8" fill="none"><ellipse cx="937.4" cy="610" rx="1.9" ry="2.6"/><path d="M937.4 612.6 v3.4 M942.6 616 v-3 M940.6 613 L942.6 607.2 L944.6 613 Z"/></g>
<g stroke="#8fbf83" stroke-width=".8" fill="none"><ellipse cx="1027.4" cy="573" rx="1.9" ry="2.6"/><path d="M1027.4 575.6 v3.4 M1032.6 579 v-3 M1030.6 576 L1032.6 570.2 L1034.6 576 Z"/></g>
<g stroke="#8fbf83" stroke-width=".8" fill="none"><ellipse cx="1067.4" cy="598" rx="1.9" ry="2.6"/><path d="M1067.4 600.6 v3.4 M1072.6 604 v-3 M1070.6 601 L1072.6 595.2 L1074.6 601 Z"/></g>
<g stroke="#8fbf83" stroke-width=".8" fill="none"><ellipse cx="1102.4" cy="618" rx="1.9" ry="2.6"/><path d="M1102.4 620.6 v3.4 M1107.6 624 v-3 M1105.6 621 L1107.6 615.2 L1109.6 621 Z"/></g>
<g stroke="#8fbf83" stroke-width=".8" fill="none"><ellipse cx="1122.4" cy="610" rx="1.9" ry="2.6"/><path d="M1122.4 612.6 v3.4 M1127.6 616 v-3 M1125.6 613 L1127.6 607.2 L1129.6 613 Z"/></g>
<g stroke="#8fbf83" stroke-width=".8" fill="none"><ellipse cx="1047.4" cy="590" rx="1.9" ry="2.6"/><path d="M1047.4 592.6 v3.4 M1052.6 596 v-3 M1050.6 593 L1052.6 587.2 L1054.6 593 Z"/></g>
<g stroke="#8fbf83" stroke-width=".8" fill="none"><ellipse cx="1297.4" cy="374" rx="1.9" ry="2.6"/><path d="M1297.4 376.6 v3.4 M1302.6 380 v-3 M1300.6 377 L1302.6 371.2 L1304.6 377 Z"/></g>
<g stroke="#8fbf83" stroke-width=".8" fill="none"><ellipse cx="1328.4" cy="375" rx="1.9" ry="2.6"/><path d="M1328.4 377.6 v3.4 M1333.6 381 v-3 M1331.6 378 L1333.6 372.2 L1335.6 378 Z"/></g>
<g stroke="#8fbf83" stroke-width=".8" fill="none"><ellipse cx="1334.4" cy="401" rx="1.9" ry="2.6"/><path d="M1334.4 403.6 v3.4 M1339.6 407 v-3 M1337.6 404 L1339.6 398.2 L1341.6 404 Z"/></g>
<g stroke="#8fbf83" stroke-width=".8" fill="none"><ellipse cx="1407.4" cy="370" rx="1.9" ry="2.6"/><path d="M1407.4 372.6 v3.4 M1412.6 376 v-3 M1410.6 373 L1412.6 367.2 L1414.6 373 Z"/></g>
<g stroke="#8fbf83" stroke-width=".8" fill="none"><ellipse cx="1452.4" cy="358" rx="1.9" ry="2.6"/><path d="M1452.4 360.6 v3.4 M1457.6 364 v-3 M1455.6 361 L1457.6 355.2 L1459.6 361 Z"/></g>
<g stroke="#8fbf83" stroke-width=".8" fill="none"><ellipse cx="1427.4" cy="390" rx="1.9" ry="2.6"/><path d="M1427.4 392.6 v3.4 M1432.6 396 v-3 M1430.6 393 L1432.6 387.2 L1434.6 393 Z"/></g>
<g stroke="#8fbf83" stroke-width=".8" fill="none"><ellipse cx="1464.4" cy="395" rx="1.9" ry="2.6"/><path d="M1464.4 397.6 v3.4 M1469.6 401 v-3 M1467.6 398 L1469.6 392.2 L1471.6 398 Z"/></g>
<g stroke="#8fbf83" stroke-width=".8" fill="none"><ellipse cx="1401.4" cy="398" rx="1.9" ry="2.6"/><path d="M1401.4 400.6 v3.4 M1406.6 404 v-3 M1404.6 401 L1406.6 395.2 L1408.6 401 Z"/></g>
<g stroke="#8fbf83" stroke-width=".8" fill="none"><ellipse cx="1407.4" cy="435" rx="1.9" ry="2.6"/><path d="M1407.4 437.6 v3.4 M1412.6 441 v-3 M1410.6 438 L1412.6 432.2 L1414.6 438 Z"/></g>
<g stroke="#8fbf83" stroke-width=".8" fill="none"><ellipse cx="1352.4" cy="398" rx="1.9" ry="2.6"/><path d="M1352.4 400.6 v3.4 M1357.6 404 v-3 M1355.6 401 L1357.6 395.2 L1359.6 401 Z"/></g>
<g stroke="#8fbf83" stroke-width=".8" fill="none"><ellipse cx="1405.4" cy="518" rx="1.9" ry="2.6"/><path d="M1405.4 520.6 v3.4 M1410.6 524 v-3 M1408.6 521 L1410.6 515.2 L1412.6 521 Z"/></g>
<g stroke="#8fbf83" stroke-width=".8" fill="none"><ellipse cx="1429.4" cy="493" rx="1.9" ry="2.6"/><path d="M1429.4 495.6 v3.4 M1434.6 499 v-3 M1432.6 496 L1434.6 490.2 L1436.6 496 Z"/></g>
<g stroke="#8fbf83" stroke-width=".8" fill="none"><ellipse cx="1439.4" cy="536" rx="1.9" ry="2.6"/><path d="M1439.4 538.6 v3.4 M1444.6 542 v-3 M1442.6 539 L1444.6 533.2 L1446.6 539 Z"/></g>
<g stroke="#8fbf83" stroke-width=".8" fill="none"><ellipse cx="1397.4" cy="563" rx="1.9" ry="2.6"/><path d="M1397.4 565.6 v3.4 M1402.6 569 v-3 M1400.6 566 L1402.6 560.2 L1404.6 566 Z"/></g>
<g stroke="#8fbf83" stroke-width=".8" fill="none"><ellipse cx="1392.4" cy="588" rx="1.9" ry="2.6"/><path d="M1392.4 590.6 v3.4 M1397.6 594 v-3 M1395.6 591 L1397.6 585.2 L1399.6 591 Z"/></g>
<g stroke="#8fbf83" stroke-width=".8" fill="none"><ellipse cx="1459.4" cy="361" rx="1.9" ry="2.6"/><path d="M1459.4 363.6 v3.4 M1464.6 367 v-3 M1462.6 364 L1464.6 358.2 L1466.6 364 Z"/></g>
<g stroke="#8fbf83" stroke-width=".8" fill="none"><ellipse cx="1399.4" cy="468" rx="1.9" ry="2.6"/><path d="M1399.4 470.6 v3.4 M1404.6 474 v-3 M1402.6 471 L1404.6 465.2 L1406.6 471 Z"/></g>
<g stroke="#8fbf83" stroke-width=".8" fill="none"><ellipse cx="1337.4" cy="400" rx="1.9" ry="2.6"/><path d="M1337.4 402.6 v3.4 M1342.6 406 v-3 M1340.6 403 L1342.6 397.2 L1344.6 403 Z"/></g>
<text x="832.0" y="398.4" text-anchor="middle" dominant-baseline="central" transform="rotate(48.8 832.0 398.4)" style="font-size:10px;" fill="#222" stroke="#fcd6a4" stroke-width="1.6" paint-order="stroke" textLength="85.7" lengthAdjust="spacingAndGlyphs">Aleja Jana Pawła II</text>
<text x="915.7" y="451.5" text-anchor="middle" dominant-baseline="central" transform="rotate(16.5 915.7 451.5)" style="font-size:10px;" fill="#222" stroke="#fcd6a4" stroke-width="1.6" paint-order="stroke" textLength="46.9" lengthAdjust="spacingAndGlyphs">Handlowa</text>
<text x="1053.1" y="564.0" text-anchor="middle" dominant-baseline="central" transform="rotate(32.2 1053.1 564.0)" style="font-size:10px;" fill="#222" stroke="#fcd6a4" stroke-width="1.6" paint-order="stroke" textLength="90.6" lengthAdjust="spacingAndGlyphs">Wincentego Witosa</text>
<text x="1018.4" y="461.3" text-anchor="middle" dominant-baseline="central" transform="rotate(0.0 1018.4 461.3)" style="font-size:11.5px;font-style:italic;" fill="#0f8a2f" stroke="#c8facc" stroke-width="1.6" paint-order="stroke" textLength="75.8" lengthAdjust="spacingAndGlyphs">Park Zamkowy</text>
<text x="1096.2" y="412.1" text-anchor="middle" dominant-baseline="central" transform="rotate(0.0 1096.2 412.1)" style="font-size:10.5px;" fill="#3a3a3a" stroke="#fff" stroke-width="1.6" paint-order="stroke" textLength="63.7" lengthAdjust="spacingAndGlyphs">Wyszymieście</text>
<text x="1095.5" y="498.0" text-anchor="middle" dominant-baseline="central" transform="rotate(0.0 1095.5 498.0)" style="font-size:10.5px;" fill="#3a3a3a" stroke="#fff" stroke-width="1.6" paint-order="stroke" textLength="76.9" lengthAdjust="spacingAndGlyphs">Osiedle Parkowe</text>
<text x="1205.8" y="461.6" text-anchor="middle" dominant-baseline="central" transform="rotate(0.0 1205.8 461.6)" style="font-size:10.5px;" fill="#3a3a3a" stroke="#fff" stroke-width="1.6" paint-order="stroke" textLength="58.3" lengthAdjust="spacingAndGlyphs">Osiedle 700-</text>
<text x="1206.2" y="473.9" text-anchor="middle" dominant-baseline="central" transform="rotate(0.0 1206.2 473.9)" style="font-size:10.5px;" fill="#3a3a3a" stroke="#fff" stroke-width="1.6" paint-order="stroke" textLength="20.7" lengthAdjust="spacingAndGlyphs">lecia</text>
<text x="1341.7" y="551.8" text-anchor="middle" dominant-baseline="central" transform="rotate(0.0 1341.7 551.8)" style="font-size:10.5px;" fill="#3a3a3a" stroke="#fff" stroke-width="1.6" paint-order="stroke" textLength="55.4" lengthAdjust="spacingAndGlyphs">Osiedle Pod</text>
<text x="1341.7" y="564.4" text-anchor="middle" dominant-baseline="central" transform="rotate(0.0 1341.7 564.4)" style="font-size:10.5px;" fill="#3a3a3a" stroke="#fff" stroke-width="1.6" paint-order="stroke" textLength="27.4" lengthAdjust="spacingAndGlyphs">Grapą</text>
<text x="1471.7" y="521.2" text-anchor="middle" dominant-baseline="central" transform="rotate(0.0 1471.7 521.2)" style="font-size:10.5px;" fill="#3a3a3a" stroke="#fff" stroke-width="1.6" paint-order="stroke" textLength="22.6" lengthAdjust="spacingAndGlyphs">Na G</text>
<text x="1120.7" y="459.6" text-anchor="middle" dominant-baseline="central" transform="rotate(63.4 1120.7 459.6)" style="font-size:9.2px;" fill="#2b2b2b" stroke="#fff" stroke-width="1.6" paint-order="stroke" textLength="50.4" lengthAdjust="spacingAndGlyphs">Komorowskich</text>
<text x="1057.6" y="354.4" text-anchor="middle" dominant-baseline="central" transform="rotate(53.4 1057.6 354.4)" style="font-size:9.2px;" fill="#2b2b2b" stroke="#fff" stroke-width="1.6" paint-order="stroke" textLength="65.7" lengthAdjust="spacingAndGlyphs">Komorowskich</text>
<text x="1174.1" y="487.3" text-anchor="middle" dominant-baseline="central" transform="rotate(70.1 1174.1 487.3)" style="font-size:9.2px;" fill="#2b2b2b" stroke="#fff" stroke-width="1.6" paint-order="stroke" textLength="147.9" lengthAdjust="spacingAndGlyphs">Aleja Marszałka Józefa Piłsudskiego</text>
<text x="1179.5" y="354.5" text-anchor="middle" dominant-baseline="central" transform="rotate(-21.3 1179.5 354.5)" style="font-size:8.8px;" fill="#2b2b2b" stroke="#fff" stroke-width="1.6" paint-order="stroke" textLength="77.8" lengthAdjust="spacingAndGlyphs">Powstańców Śląskich</text>
<text x="1249.2" y="356.9" text-anchor="middle" dominant-baseline="central" transform="rotate(24.5 1249.2 356.9)" style="font-size:8.8px;" fill="#2b2b2b" stroke="#fff" stroke-width="1.6" paint-order="stroke" textLength="29.2" lengthAdjust="spacingAndGlyphs">Folwark</text>
<text x="1294.3" y="396.0" text-anchor="middle" dominant-baseline="central" transform="rotate(15.8 1294.3 396.0)" style="font-size:8.8px;" fill="#2b2b2b" stroke="#fff" stroke-width="1.6" paint-order="stroke" textLength="29.3" lengthAdjust="spacingAndGlyphs">Folwark</text>
<text x="1330.2" y="447.1" text-anchor="middle" dominant-baseline="central" transform="rotate(28.1 1330.2 447.1)" style="font-size:8.8px;" fill="#2b2b2b" stroke="#fff" stroke-width="1.6" paint-order="stroke" textLength="29.1" lengthAdjust="spacingAndGlyphs">Folwark</text>
<text x="1146.5" y="473.0" text-anchor="middle" dominant-baseline="central" transform="rotate(-19.4 1146.5 473.0)" style="font-size:8.5px;" fill="#2b2b2b" stroke="#fff" stroke-width="1.6" paint-order="stroke" textLength="17.2" lengthAdjust="spacingAndGlyphs">Jana</text>
<text x="1207.3" y="450.8" text-anchor="middle" dominant-baseline="central" transform="rotate(-17.4 1207.3 450.8)" style="font-size:8.5px;" fill="#2b2b2b" stroke="#fff" stroke-width="1.6" paint-order="stroke" textLength="16.0" lengthAdjust="spacingAndGlyphs">Jana</text>
<text x="1136.0" y="448.8" text-anchor="middle" dominant-baseline="central" transform="rotate(74.2 1136.0 448.8)" style="font-size:8.2px;" fill="#2b2b2b" stroke="#fff" stroke-width="1.6" paint-order="stroke" textLength="29.3" lengthAdjust="spacingAndGlyphs">Słowicza</text>
<text x="1272.3" y="492.7" text-anchor="middle" dominant-baseline="central" transform="rotate(-16.4 1272.3 492.7)" style="font-size:8.8px;" fill="#2b2b2b" stroke="#fff" stroke-width="1.6" paint-order="stroke" textLength="44.0" lengthAdjust="spacingAndGlyphs">Południowa</text>
<text x="1287.5" y="566.7" text-anchor="middle" dominant-baseline="central" transform="rotate(-42.0 1287.5 566.7)" style="font-size:8.8px;" fill="#2b2b2b" stroke="#fff" stroke-width="1.6" paint-order="stroke" textLength="44.5" lengthAdjust="spacingAndGlyphs">Habsburgów</text>
<text x="1295.4" y="598.1" text-anchor="middle" dominant-baseline="central" transform="rotate(-7.3 1295.4 598.1)" style="font-size:8.8px;" fill="#2b2b2b" stroke="#fff" stroke-width="1.6" paint-order="stroke" textLength="25.8" lengthAdjust="spacingAndGlyphs">Wodna</text>
<text x="1292.5" y="615.9" text-anchor="middle" dominant-baseline="central" transform="rotate(-7.6 1292.5 615.9)" style="font-size:8.8px;" fill="#2b2b2b" stroke="#fff" stroke-width="1.6" paint-order="stroke" textLength="31.7" lengthAdjust="spacingAndGlyphs">Klonowa</text>
<text x="1295.0" y="629.0" text-anchor="middle" dominant-baseline="central" transform="rotate(-54.5 1295.0 629.0)" style="font-size:8.5px;" fill="#2b2b2b" stroke="#fff" stroke-width="1.6" paint-order="stroke" textLength="17.2" lengthAdjust="spacingAndGlyphs">Jana</text>
<text x="1342.2" y="604.7" text-anchor="middle" dominant-baseline="central" transform="rotate(-7.3 1342.2 604.7)" style="font-size:11.5px;font-style:italic;" fill="#4d80b3" stroke="#fff" stroke-width="1.6" paint-order="stroke" textLength="51.7" lengthAdjust="spacingAndGlyphs">Młynówka</text>
<text x="1388.4" y="583.6" text-anchor="middle" dominant-baseline="central" transform="rotate(90.0 1388.4 583.6)" style="font-size:8.5px;" fill="#2b2b2b" stroke="#fff" stroke-width="1.6" paint-order="stroke" textLength="20.7" lengthAdjust="spacingAndGlyphs">Grapa</text>
<text x="1042.2" y="610.5" text-anchor="middle" dominant-baseline="central" transform="rotate(29.5 1042.2 610.5)" style="font-size:11.5px;font-style:italic;" fill="#4d80b3" stroke="#aad3df" stroke-width="1.6" paint-order="stroke" textLength="57.0" lengthAdjust="spacingAndGlyphs">Koszarawa</text>
<text x="879.2" y="506.3" text-anchor="middle" dominant-baseline="central" transform="rotate(87.9 879.2 506.3)" style="font-size:11px;font-style:italic;" fill="#4d80b3" stroke="#aad3df" stroke-width="1.6" paint-order="stroke" textLength="21.4" lengthAdjust="spacingAndGlyphs">Soła</text>
<text x="836.5" y="547.7" text-anchor="middle" dominant-baseline="central" transform="rotate(-82.5 836.5 547.7)" style="font-size:9px;font-style:italic;" fill="#4d80b3" stroke="#fff" stroke-width="1.6" paint-order="stroke" textLength="38.3" lengthAdjust="spacingAndGlyphs">Jaziówka</text>
<text x="766.3" y="487.3" text-anchor="middle" dominant-baseline="central" transform="rotate(0.0 766.3 487.3)" style="font-size:8.5px;" fill="#2b2b2b" stroke="#fff" stroke-width="1.6" paint-order="stroke" textLength="38.0" lengthAdjust="spacingAndGlyphs">Garbarska</text>
<text x="798.6" y="508.4" text-anchor="middle" dominant-baseline="central" transform="rotate(87.3 798.6 508.4)" style="font-size:8.2px;" fill="#2b2b2b" stroke="#fff" stroke-width="1.6" paint-order="stroke" textLength="34.0" lengthAdjust="spacingAndGlyphs">Rzeźnicza</text>
<text x="794.0" y="550.5" text-anchor="middle" dominant-baseline="central" transform="rotate(-41.1 794.0 550.5)" style="font-size:8.5px;" fill="#2b2b2b" stroke="#fff" stroke-width="1.6" paint-order="stroke" textLength="34.0" lengthAdjust="spacingAndGlyphs">Rzeźnicza</text>
<text x="750.6" y="532.4" text-anchor="middle" dominant-baseline="central" transform="rotate(69.7 750.6 532.4)" style="font-size:8.5px;" fill="#2b2b2b" stroke="#fff" stroke-width="1.6" paint-order="stroke" textLength="38.0" lengthAdjust="spacingAndGlyphs">Futrzarska</text>
<text x="769.6" y="611.0" text-anchor="middle" dominant-baseline="central" transform="rotate(-84.9 769.6 611.0)" style="font-size:8.5px;" fill="#2b2b2b" stroke="#fff" stroke-width="1.6" paint-order="stroke" textLength="37.3" lengthAdjust="spacingAndGlyphs">Futrzarska</text>
<text x="842.0" y="574.2" text-anchor="middle" dominant-baseline="central" transform="rotate(0.0 842.0 574.2)" style="font-size:8.8px;" fill="#2b2b2b" stroke="#fff" stroke-width="1.6" paint-order="stroke" textLength="29.0" lengthAdjust="spacingAndGlyphs">Sadowa</text>
<text x="741.5" y="603.1" text-anchor="middle" dominant-baseline="central" transform="rotate(5.7 741.5 603.1)" style="font-size:8.5px;" fill="#2b2b2b" stroke="#fff" stroke-width="1.6" paint-order="stroke" textLength="33.2" lengthAdjust="spacingAndGlyphs">Spokojna</text>
<text x="732.8" y="611.3" text-anchor="middle" dominant-baseline="central" transform="rotate(2.0 732.8 611.3)" style="font-size:8.5px;" fill="#2b2b2b" stroke="#fff" stroke-width="1.6" paint-order="stroke" textLength="17.5" lengthAdjust="spacingAndGlyphs">Maja</text>
<text x="800.2" y="613.9" text-anchor="middle" dominant-baseline="central" transform="rotate(-78.6 800.2 613.9)" style="font-size:8.2px;" fill="#2b2b2b" stroke="#fff" stroke-width="1.6" paint-order="stroke" textLength="25.3" lengthAdjust="spacingAndGlyphs">Sądowa</text>
<text x="739.3" y="626.3" text-anchor="middle" dominant-baseline="central" transform="rotate(0.0 739.3 626.3)" style="font-size:14.5px;" fill="#777" stroke="#fff" stroke-width="1.6" paint-order="stroke" textLength="32.6" lengthAdjust="spacingAndGlyphs">łocie</text>
<text x="731.5" y="574.7" text-anchor="middle" dominant-baseline="central" transform="rotate(0.0 731.5 574.7)" style="font-size:8.8px;" fill="#2b2b2b" stroke="#fff" stroke-width="1.6" paint-order="stroke" textLength="16.9" lengthAdjust="spacingAndGlyphs">lkole</text>
<text x="806.2" y="440.4" text-anchor="middle" dominant-baseline="central" transform="rotate(42.6 806.2 440.4)" style="font-size:8.5px;" fill="#2b2b2b" stroke="#fff" stroke-width="1.6" paint-order="stroke" textLength="28.5" lengthAdjust="spacingAndGlyphs">Wałowa</text>
<text x="860.2" y="347.7" text-anchor="middle" dominant-baseline="central" transform="rotate(-28.9 860.2 347.7)" style="font-size:8.8px;" fill="#2b2b2b" stroke="#fff" stroke-width="1.6" paint-order="stroke" textLength="36.8" lengthAdjust="spacingAndGlyphs">Tadeusza</text>
<text x="897.7" y="371.9" text-anchor="middle" dominant-baseline="central" transform="rotate(63.5 897.7 371.9)" style="font-size:8.5px;" fill="#2b2b2b" stroke="#fff" stroke-width="1.6" paint-order="stroke" textLength="70.3" lengthAdjust="spacingAndGlyphs">Wincentego Witosa</text>
<text x="873.5" y="363.4" text-anchor="middle" dominant-baseline="central" transform="rotate(54.2 873.5 363.4)" style="font-size:8.5px;" fill="#2b2b2b" stroke="#fff" stroke-width="1.6" paint-order="stroke" textLength="42.8" lengthAdjust="spacingAndGlyphs">Wałowa</text>
<text x="767.5" y="404.5" text-anchor="middle" dominant-baseline="central" transform="rotate(71.6 767.5 404.5)" style="font-size:8.2px;" fill="#2b2b2b" stroke="#fff" stroke-width="1.6" paint-order="stroke" textLength="9.5" lengthAdjust="spacingAndGlyphs">Ja</text>
<text x="723.0" y="411.0" text-anchor="middle" dominant-baseline="central" transform="rotate(18.4 723.0 411.0)" style="font-size:8.5px;" fill="#2b2b2b" stroke="#fff" stroke-width="1.6" paint-order="stroke" textLength="12.6" lengthAdjust="spacingAndGlyphs">ła</text>
<rect x="957.3" y="472.6" width="27.2" height="17.6" rx="2.5" fill="#fde6c2" stroke="#a3875c" stroke-width=".8"/>
<text x="970.9" y="481.6" text-anchor="middle" dominant-baseline="central" style="font-size:9.6px" fill="#5a4a30">945</text>
<g stroke="#5b86c0" stroke-width="1.2" fill="none"><path d="M791 376.5 q3 -1.6 3.6 2 v6.5 M796.6 377.2 v8 M799.8 378 q0 -2.6 3 -1.4 M799.8 378 v7.6"/><path d="M790.5 388 q1.6 -1.6 3.2 0 t3.2 0 t3.2 0 t3.2 0"/></g>
</svg>
<div class="abs" style="left:736px;top:349.3px;width:51.6px;height:51.6px;border-radius:50%;background:#dee1e8"></div>
<svg class="abs" style="left:736px;top:349.3px" width="52" height="52" viewBox="0 0 52 52" fill="#1f2024"><path d="M26 8.5 L30 15 H22 Z M26 43 L30 36.5 H22 Z M8.8 25.8 L15.3 21.8 V29.8 Z M43.4 25.8 L36.9 21.8 V29.8 Z"/></svg>
<div class="abs" style="left:813.5px;top:359px;width:61.5px;height:30.6px;border-radius:5px;background:#e4e8fd"></div>
<svg class="abs" style="left:813.5px;top:359px" width="62" height="31" viewBox="0 0 62 31" stroke="#2b2fd2" stroke-width="1.9" fill="none"><path d="M10 16.1 H20.6 M15.3 10.8 V21.4 M41 16.1 H51.4"/></svg>
<svg class="abs" style="left:1091.1px;top:454px" width="21.8" height="31.4" viewBox="0 0 24 32" preserveAspectRatio="none"><path fill-rule="evenodd" d="M12 .3 C5.4 .3 .3 5.4 .3 11.8 C.3 18.6 7 23.4 12 31.8 C17 23.4 23.7 18.6 23.7 11.8 C23.7 5.4 18.6 .3 12 .3 Z M12 4.1 a7.8 7.8 0 1 0 .01 0 Z M12 8.5 a3.4 3.4 0 1 1 -.01 0 Z" fill="#2b2fd2"/></svg>
<div class="abs" style="left:1332px;top:615px;width:149px;height:20.6px;background:rgba(255,255,255,.72)"></div>
<div class="t" style="left:1338.6px;top:620.2px;font-size:10.2px;color:#2a2a2a;letter-spacing:-.1px">© <span style="color:#1212e6">OpenStreetMap contributors</span></div>
<!-- MAPEND -->

<!-- MID TABS -->
<svg class="abs" style="left:728px;top:680.8px" width="6.4" height="8.6" viewBox="0 0 6.4 8.6"><path d="M6.4 0 V8.6 L0 4.3 Z" fill="#4a4a4e"/></svg>
<div class="tb2 on" style="left:743.4px;width:149.2px"></div>
<div class="tb2" style="left:893px;width:149.6px"></div>
<div class="tb2" style="left:1043px;width:149.7px"></div>
<div class="tb2" style="left:1193.1px;width:175.6px"></div>
<div class="tb2" style="left:1369.2px;width:90.8px;border-right:none;border-radius:5px 0 0 0"></div>
<svg class="abs" style="left:1469.6px;top:680.8px" width="6.4" height="8.6" viewBox="0 0 6.4 8.6"><path d="M0 0 V8.6 L6.4 4.3 Z" fill="#1f2024"/></svg>
<div class="abs" style="left:718px;top:717px;width:766.5px;height:230px;background:#f9f9fc;border:1px solid #e5e6ef;border-radius:0 4px 0 0"></div>
<div class="abs" style="left:745px;top:716px;width:146px;height:3px;background:#f9f9fc"></div>
<svg class="abs" style="left:771px;top:678.6px" width="17" height="14.4" viewBox="0 0 17 14.4" fill="none"><path d="M.6 2.2 L2.2 3.8 L4.6 .8" stroke="#1f2026" stroke-width="1.3"/><path d="M.6 6.8 L2.2 8.4 L4.6 5.4" stroke="#1f2026" stroke-width="1.3"/><circle cx="2.4" cy="12.4" r="1.3" fill="#1f2026"/><path d="M7 2.4 H16.6 M7 7.2 H16.6 M7 12.2 H16.6" stroke="#8b8b90" stroke-width="1.5"/></svg>
<div class="t" style="left:794.6px;top:679.2px;font-size:13px;letter-spacing:.03px">Zadania</div>
<div class="abs" style="left:759.1px;top:705.8px;width:118px;height:6px;border-radius:3px;background:#7fe3df"></div>
<svg class="abs" style="left:922px;top:676.8px" width="15.4" height="16.2" viewBox="0 0 15.4 16.2"><path d="M.4 .2 L9.4 8.1 L.4 16 Z" fill="#2b2fd2"/><path d="M2 .4 L12.4 6.6 L10 8.1 Z M2 15.8 L12.4 9.6 L10 8.1 Z" fill="#2b2fd2"/><circle cx="13.6" cy="8.1" r="1.5" fill="#2b2fd2"/></svg>
<div class="t lnk" style="left:945px;top:679.2px;font-size:13px;letter-spacing:.12px">Aplikacje</div>
<svg class="abs" style="left:1073.6px;top:676.8px" width="12.4" height="16.2" viewBox="0 0 12.4 16.2"><path d="M1.6 0 H8.4 L12.4 4 V14.6 a1.6 1.6 0 0 1 -1.6 1.6 H1.6 A1.6 1.6 0 0 1 0 14.6 V1.6 A1.6 1.6 0 0 1 1.6 0 Z" fill="#9ea3ec"/><path d="M8.4 0 L12.4 4 H8.4 Z" fill="#c9ccf5"/><circle cx="3.8" cy="7.2" r="1.1" fill="#fff"/><path d="M2.4 13.6 L6.8 8.4 L10.4 13.6 Z" fill="#2b2fd2"/></svg>
<div class="t lnk" style="left:1094.6px;top:679.2px;font-size:13px;letter-spacing:-.1px">Pliki</div>
<svg class="abs" style="left:1221.8px;top:676.8px" width="16.4" height="16.2" viewBox="0 0 16.4 16.2"><path d="M7.6 0 H13.2 L16.2 3 V11.4 a1.3 1.3 0 0 1 -1.3 1.3 H7.6 a1.3 1.3 0 0 1 -1.3 -1.3 V1.3 A1.3 1.3 0 0 1 7.6 0 Z" fill="#9ea3ec"/><path d="M1.3 4 H5 V12.8 a1.2 1.2 0 0 0 1.2 1.2 H9 V14.9 a1.3 1.3 0 0 1 -1.3 1.3 H1.3 A1.3 1.3 0 0 1 0 14.9 V5.3 A1.3 1.3 0 0 1 1.3 4 Z" fill="#2b2fd2"/></svg>
<div class="t lnk" style="left:1244.6px;top:679.2px;font-size:13px">Kopie zapasowe</div>
<svg class="abs" style="left:1399px;top:676.8px" width="15" height="16.2" viewBox="0 0 15 16.2"><path d="M7.5 .2 L14.6 2.6 V7.4 C14.6 11.6 11.8 14.4 7.5 16 C3.2 14.4 .4 11.6 .4 7.4 V2.6 Z" fill="#9ea3ec"/><path d="M4.4 7.9 L6.6 10 L10.6 5.9" fill="none" stroke="#2b2fd2" stroke-width="1.3"/></svg>
<div class="t lnk" style="left:1421.3px;top:679.2px;font-size:13px;letter-spacing:.05px;width:38.7px;overflow:hidden">Polityki</div>
<div class="abs" style="left:1379.2px;top:731px;width:84.8px;height:30.7px;border:1.6px solid #2f7cf0;border-radius:5px;background:#eef3fd"></div>
<div class="t" style="left:1407.8px;top:740.4px;font-size:13px;color:#3a2fc4;letter-spacing:.05px">Odśwież</div>
<svg class="abs" style="left:766.9px;top:776.9px" width="20.4" height="20" viewBox="0 0 20.4 20"><path d="M5.2 .3 H15.2 a2 2 0 0 1 1.4 .6 L19.5 3.8 a2 2 0 0 1 .6 1.4 V14.8 a2 2 0 0 1 -.6 1.4 L16.6 19.1 a2 2 0 0 1 -1.4 .6 H5.2 a2 2 0 0 1 -1.4 -.6 L.9 16.2 a2 2 0 0 1 -.6 -1.4 V5.2 A2 2 0 0 1 .9 3.8 L3.8 .9 A2 2 0 0 1 5.2 .3 Z" fill="#f3da4f"/><circle cx="10.2" cy="10" r="6.6" fill="none" stroke="#2a2a2a" stroke-width="1.2"/><path d="M10.2 5.8 V10.2 L13 11.6" fill="none" stroke="#2a2a2a" stroke-width="1.2"/></svg>
<div class="tk" style="left:798.2px;top:779.7px;letter-spacing:0.19px">W oczekiwaniu</div>
<div class="tk" style="left:943.3px;top:779.7px;letter-spacing:0.05px">Przypisz politykę - Testowa polityka</div>
<div class="tk" style="left:1341.4px;top:779.7px;letter-spacing:.12px">21.11.2023</div>
<div class="tk" style="left:1341.8px;top:800.5px;letter-spacing:-.3px">10:17</div>
<svg class="abs" style="left:766.9px;top:850.2px" width="20.4" height="20" viewBox="0 0 20.4 20"><path d="M5.2 .3 H15.2 a2 2 0 0 1 1.4 .6 L19.5 3.8 a2 2 0 0 1 .6 1.4 V14.8 a2 2 0 0 1 -.6 1.4 L16.6 19.1 a2 2 0 0 1 -1.4 .6 H5.2 a2 2 0 0 1 -1.4 -.6 L.9 16.2 a2 2 0 0 1 -.6 -1.4 V5.2 A2 2 0 0 1 .9 3.8 L3.8 .9 A2 2 0 0 1 5.2 .3 Z" fill="#ec5153"/><circle cx="10.2" cy="10" r="6.8" fill="none" stroke="#fff" stroke-width="1.2"/><path d="M10.2 5.8 V10.8" stroke="#f6c6c6" stroke-width="1.7"/><circle cx="10.2" cy="13.3" r="1" fill="#f6c6c6"/></svg>
<div class="tk" style="left:798.2px;top:853.0px;letter-spacing:-0.3px">Błąd</div>
<div class="tk" style="left:943.3px;top:853.0px;letter-spacing:0.08px">Przypisz politykę - Zabraniaj wszystkiego</div>
<div class="tk" style="left:1341.4px;top:853.0px;letter-spacing:.12px">18.09.2023</div>
<div class="tk" style="left:1341.8px;top:873.8px;letter-spacing:-.3px">08:02</div>
<svg class="abs" style="left:766.9px;top:923.5px" width="20.4" height="20" viewBox="0 0 20.4 20"><path d="M5.2 .3 H15.2 a2 2 0 0 1 1.4 .6 L19.5 3.8 a2 2 0 0 1 .6 1.4 V14.8 a2 2 0 0 1 -.6 1.4 L16.6 19.1 a2 2 0 0 1 -1.4 .6 H5.2 a2 2 0 0 1 -1.4 -.6 L.9 16.2 a2 2 0 0 1 -.6 -1.4 V5.2 A2 2 0 0 1 .9 3.8 L3.8 .9 A2 2 0 0 1 5.2 .3 Z" fill="#2fa37a"/><circle cx="10.2" cy="10" r="6.8" fill="none" stroke="#fff" stroke-width="1.2"/><path d="M7 10.2 L9.4 12.6 L14.6 6.4" fill="none" stroke="#fff" stroke-width="1.4"/></svg>
<div class="tk" style="left:798.2px;top:926.3px;letter-spacing:0.1px">Wykonano</div>
<div class="tk" style="left:943.3px;top:926.3px;letter-spacing:0.08px">Usuń politykę - Zabraniaj wszystkiego</div>
<div class="tk" style="left:1341.4px;top:926.3px;letter-spacing:.12px">18.09.2023</div>
<div class="tk" style="left:1341.8px;top:947.1px;letter-spacing:-.3px">08:01</div>
<div class="abs" style="left:736.8px;top:834px;width:729.4px;height:1px;background:#e8e8ef"></div>
<div class="abs" style="left:736.8px;top:907.3px;width:729.4px;height:1px;background:#e8e8ef"></div>
<!-- NOTIF -->
<div class="card" style="left:1515px;top:279px;width:368px;height:700px"><div class="hd" style="top:15.4px">Powiadomienia</div><div class="dv" style="top:53px"></div></div>
<div class="abs" style="left:1532px;top:348.7px;width:334.2px;height:600px;background:#fff"></div>
<div class="nt" style="top:354.4px;height:60.4px"><svg class="abs" style="left:19.4px;top:8.6px" width="20" height="21" viewBox="0 0 20 21" fill="none" stroke="#5a5a5f" stroke-width="1.1"><path d="M10.6 1.7 L19.5 6.4 V15.3 L10.6 20.1 L1.7 15.3 V6.4 Z"/><path d="M10.6 7.2 V12" stroke="#8e8e93" stroke-width="1.5"/><circle cx="10.6" cy="14.6" r=".9" fill="#8e8e93" stroke="none"/></svg><div class="tt">Wyłączono urządznie</div><div class="dt" style="top:37.0px">19.09.2023 09:02</div></div>
<div class="nt" style="top:420.6px;height:60.6px"><svg class="abs" style="left:19.4px;top:8.6px" width="20" height="21" viewBox="0 0 20 21" fill="none" stroke="#5a5a5f" stroke-width="1.1"><path d="M10.6 1.7 L19.5 6.4 V15.3 L10.6 20.1 L1.7 15.3 V6.4 Z"/><path d="M10.6 7.2 V12" stroke="#8e8e93" stroke-width="1.5"/><circle cx="10.6" cy="14.6" r=".9" fill="#8e8e93" stroke="none"/></svg><div class="tt">Wyłączono bluetooth</div><div class="dt" style="top:37.2px">19.09.2023 09:02</div></div>
<div class="nt" style="top:487.1px;height:60.6px"><svg class="abs" style="left:19.4px;top:8.6px" width="20" height="21" viewBox="0 0 20 21" fill="none" stroke="#5a5a5f" stroke-width="1.1"><path d="M10.6 1.7 L19.5 6.4 V15.3 L10.6 20.1 L1.7 15.3 V6.4 Z"/><path d="M10.6 7.2 V12" stroke="#8e8e93" stroke-width="1.5"/><circle cx="10.6" cy="14.6" r=".9" fill="#8e8e93" stroke="none"/></svg><div class="tt">Włączono bluetooth</div><div class="dt" style="top:37.2px">13.09.2023 09:15</div></div>
<div class="nt" style="top:553.3px;height:60.8px"><svg class="abs" style="left:19.4px;top:8.6px" width="20" height="21" viewBox="0 0 20 21" fill="none" stroke="#5a5a5f" stroke-width="1.1"><path d="M10.6 1.7 L19.5 6.4 V15.3 L10.6 20.1 L1.7 15.3 V6.4 Z"/><path d="M10.6 7.2 V12" stroke="#8e8e93" stroke-width="1.5"/><circle cx="10.6" cy="14.6" r=".9" fill="#8e8e93" stroke="none"/></svg><div class="tt">Wyłączono bluetooth</div><div class="dt" style="top:37.4px">13.09.2023 09:15</div></div>
<div class="nt" style="top:620.4px;height:79.4px"><svg class="abs" style="left:19.4px;top:8.6px" width="20" height="21" viewBox="0 0 20 21" fill="none" stroke="#5a5a5f" stroke-width="1.1"><path d="M10.6 1.7 L19.5 6.4 V15.3 L10.6 20.1 L1.7 15.3 V6.4 Z"/><path d="M10.6 7.2 V12" stroke="#8e8e93" stroke-width="1.5"/><circle cx="10.6" cy="14.6" r=".9" fill="#8e8e93" stroke="none"/></svg><div class="tt">Włączono wyświetlanie nad innymi<br>aplikacjami</div><div class="dt" style="top:56.0px">13.09.2023 09:02</div></div>
<div class="nt" style="top:705.6px;height:60.6px"><svg class="abs" style="left:19.4px;top:8.6px" width="20" height="21" viewBox="0 0 20 21" fill="none" stroke="#5a5a5f" stroke-width="1.1"><path d="M10.6 1.7 L19.5 6.4 V15.3 L10.6 20.1 L1.7 15.3 V6.4 Z"/><path d="M10.6 7.2 V12" stroke="#8e8e93" stroke-width="1.5"/><circle cx="10.6" cy="14.6" r=".9" fill="#8e8e93" stroke="none"/></svg><div class="tt">Włączono urządzenie</div><div class="dt" style="top:37.2px">13.09.2023 09:01</div></div>
<div class="nt" style="top:772.4px;height:60.4px"><svg class="abs" style="left:19.4px;top:8.6px" width="20" height="21" viewBox="0 0 20 21" fill="none" stroke="#5a5a5f" stroke-width="1.1"><path d="M10.6 1.7 L19.5 6.4 V15.3 L10.6 20.1 L1.7 15.3 V6.4 Z"/><path d="M10.6 7.2 V12" stroke="#8e8e93" stroke-width="1.5"/><circle cx="10.6" cy="14.6" r=".9" fill="#8e8e93" stroke="none"/></svg><div class="tt">Połączono z Wi-Fi</div><div class="dt" style="top:37.0px">13.09.2023 09:01</div></div>
<div class="nt" style="top:838.6px;height:60.8px"><svg class="abs" style="left:19.4px;top:8.6px" width="20" height="21" viewBox="0 0 20 21" fill="none" stroke="#5a5a5f" stroke-width="1.1"><path d="M10.6 1.7 L19.5 6.4 V15.3 L10.6 20.1 L1.7 15.3 V6.4 Z"/><path d="M10.6 7.2 V12" stroke="#8e8e93" stroke-width="1.5"/><circle cx="10.6" cy="14.6" r=".9" fill="#8e8e93" stroke="none"/></svg><div class="tt">Włączono lokalizację</div><div class="dt" style="top:37.4px">13.09.2023 09:01</div></div>
<div class="nt" style="top:905.4px;height:60.6px"><svg class="abs" style="left:19.4px;top:8.6px" width="20" height="21" viewBox="0 0 20 21" fill="none" stroke="#5a5a5f" stroke-width="1.1"><path d="M10.6 1.7 L19.5 6.4 V15.3 L10.6 20.1 L1.7 15.3 V6.4 Z"/><path d="M10.6 7.2 V12" stroke="#8e8e93" stroke-width="1.5"/><circle cx="10.6" cy="14.6" r=".9" fill="#8e8e93" stroke="none"/></svg><div class="tt">Włączono bluetooth</div><div class="dt" style="top:37.2px">13.09.2023 09:01</div></div>
<div class="abs" style="left:1902.5px;top:0;width:17.5px;height:931px;background:#f1f1f1"></div>
<div class="abs" style="left:1905px;top:17px;width:13px;height:535px;background:#c1c1c1"></div>
<svg class="abs" style="left:1907.6px;top:6.8px" width="7.8" height="4.4" viewBox="0 0 7.8 4.4"><path d="M0 4.4 L3.9 0 L7.8 4.4 Z" fill="#a3a3a3"/></svg>
<svg class="abs" style="left:1907.6px;top:919.6px" width="7.8" height="4.4" viewBox="0 0 7.8 4.4"><path d="M0 0 L3.9 4.4 L7.8 0 Z" fill="#505050"/></svg>

<!-- ARROW -->
<svg class="abs" style="left:790px;top:200px;overflow:visible" width="280" height="120" viewBox="790 200 280 120"><defs><filter id="ash" x="-10%" y="-20%" width="120%" height="150%"><feGaussianBlur in="SourceAlpha" stdDeviation="2.2"/><feOffset dx="1.5" dy="3"/><feComponentTransfer><feFuncA type="linear" slope=".45"/></feComponentTransfer><feMerge><feMergeNode/><feMergeNode in="SourceGraphic"/></feMerge></filter></defs><path d="M812 225.6 L840.2 222.5 L835 226.6 L940 263 L1048.3 302.6 L1047.8 304 L935 271.5 L832.4 239.4 L833 244.8 Z" fill="#8fd33f" filter="url(#ash)"/></svg>
</body>
</html>
